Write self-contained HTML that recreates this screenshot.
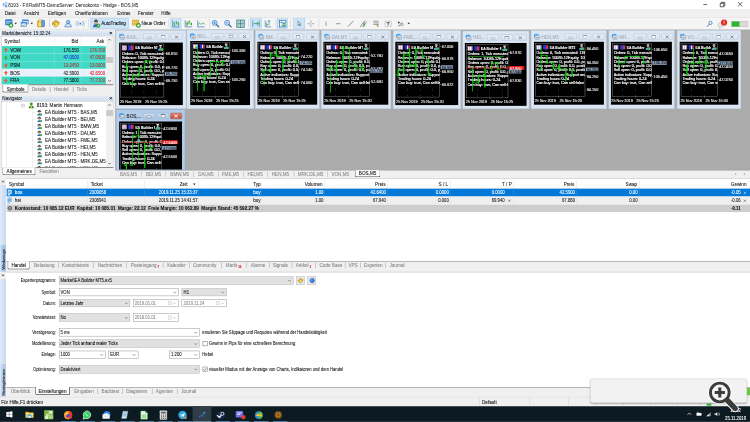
<!DOCTYPE html>
<html lang="de"><head><meta charset="utf-8"><title>8193 - FXFlatMT5-DemoServer: Demokonto - Hedge - BOS,M5</title>
<style>
html,body{margin:0;padding:0;background:#fff;}
body{width:750px;height:422px;overflow:hidden;position:relative;}
#r{position:absolute;left:0;top:0;width:1920px;height:1081px;transform:scale(0.390625);transform-origin:0 0;
font-family:"Liberation Sans",sans-serif;font-size:12px;overflow:hidden;background:#fff;filter:blur(0px);-webkit-text-stroke-width:.22px;}
#r div,#r svg{position:absolute;box-sizing:border-box;white-space:nowrap;}
#r svg{overflow:visible;}
</style></head>
<body><div id="r">
<div style="left:0px;top:0px;width:1920px;height:23.55px;background:#ffffff;"></div>
<svg style="left:6.66px;top:5.12px;width:11.78px;height:13.82px;" viewBox="0 0 10 12"><rect x="0" y="2" width="4" height="8" fill="#8fb8e6"/><rect x="5" y="0" width="5" height="6" fill="#a8d0f2"/><rect x="5" y="7" width="5" height="5" fill="#6f9fd6"/></svg>
<div style="top:4.54px;height:16px;line-height:16px;font-size:12px;color:#2a2a2a;left:20.99px;transform:scaleX(0.985);transform-origin:0 50%;-webkit-text-stroke-width:.1px;">8193 - FXFlatMT5-DemoServer: Demokonto - Hedge - BOS,M5</div>
<svg style="left:1798.4px;top:4.1px;width:15.36px;height:15.36px;" viewBox="0 0 12 12"><path d="M2 6H9.500" stroke="#111" stroke-width="1.300" fill="none"/></svg>
<svg style="left:1842.18px;top:4.1px;width:15.36px;height:15.36px;" viewBox="0 0 12 12"><path d="M1.500 3.500H8.500V10.500H1.500Z M3.500 3.500V1.500H10.500V8.500H8.500" stroke="#111" stroke-width="1.300" fill="none"/></svg>
<svg style="left:1888.26px;top:4.1px;width:13.82px;height:13.82px;" viewBox="0 0 12 12"><path d="M1 1L11 11M11 1L1 11" stroke="#111" stroke-width="1.400" fill="none"/></svg>
<div style="left:0px;top:23.04px;width:1920px;height:21.5px;background:#f0f0f0;"></div>
<div style="top:25.79px;height:16px;line-height:16px;font-size:12px;color:#1a1a1a;left:12.29px;transform:scaleX(0.99);transform-origin:0 50%;">Datei</div>
<div style="top:25.79px;height:16px;line-height:16px;font-size:12px;color:#1a1a1a;left:60.93px;transform:scaleX(0.99);transform-origin:0 50%;">Ansicht</div>
<div style="top:25.79px;height:16px;line-height:16px;font-size:12px;color:#1a1a1a;left:122.37px;transform:scaleX(0.99);transform-origin:0 50%;">Einfügen</div>
<div style="top:25.79px;height:16px;line-height:16px;font-size:12px;color:#1a1a1a;left:192.00px;transform:scaleX(0.99);transform-origin:0 50%;">Chartfunktionen</div>
<div style="top:25.79px;height:16px;line-height:16px;font-size:12px;color:#1a1a1a;left:300.29px;transform:scaleX(0.99);transform-origin:0 50%;">Extras</div>
<div style="top:25.79px;height:16px;line-height:16px;font-size:12px;color:#1a1a1a;left:352.77px;transform:scaleX(0.99);transform-origin:0 50%;">Fenster</div>
<div style="top:25.79px;height:16px;line-height:16px;font-size:12px;color:#1a1a1a;left:412.67px;transform:scaleX(0.99);transform-origin:0 50%;">Hilfe</div>
<div style="left:0px;top:44.54px;width:1920px;height:31.23px;background:#f5f5f5;border-top:1px solid #d4d4d4;border-bottom:1px solid #c4c4c4;"></div>
<svg style="left:12.8px;top:49.15px;width:22.02px;height:22.02px;" viewBox="0 0 22 22"><rect x="1" y="1" width="17" height="14" rx="1" fill="#3f86d8" stroke="#2c6db5" stroke-width="1.2"/><rect x="3" y="5" width="13" height="2.500" fill="#a9cdf3"/><rect x="3" y="9" width="8" height="2.500" fill="#a9cdf3"/><circle cx="15" cy="16" r="5.5" fill="#3fb33f" stroke="#1d7d1d" stroke-width="1"/><path d="M15 13V19M12 16H18" stroke="#fff" stroke-width="2"/></svg>
<svg style="left:37.12px;top:58.37px;width:6.66px;height:4.1px;" viewBox="0 0 8 5"><path d="M0 0H8L4 5Z" fill="#222"/></svg>
<svg style="left:51.71px;top:49.15px;width:22.02px;height:22.02px;" viewBox="0 0 22 22"><rect x="6" y="2" width="14" height="10" fill="#e8f2fc" stroke="#2c6db5" stroke-width="1.6"/><rect x="2" y="8" width="14" height="10" fill="#e8f2fc" stroke="#2c6db5" stroke-width="1.6"/><rect x="2" y="8" width="14" height="3" fill="#3d86d6"/><rect x="6" y="2" width="14" height="3" fill="#3d86d6"/><path d="M5 15l2 2 4-4" stroke="#3fb33f" stroke-width="1.6" fill="none"/></svg>
<svg style="left:77.57px;top:58.37px;width:6.66px;height:4.1px;" viewBox="0 0 8 5"><path d="M0 0H8L4 5Z" fill="#222"/></svg>
<svg style="left:92.93px;top:48.64px;width:23.04px;height:23.04px;" viewBox="0 0 22 22"><rect x="3" y="4" width="16" height="15" rx="1.5" fill="#f3c23a" stroke="#b8860b" stroke-width="1.3"/><rect x="6" y="2" width="10" height="5" fill="#fbe08a" stroke="#b8860b" stroke-width="1"/><rect x="7.500" y="8" width="3" height="9" fill="#fff3b8"/><rect x="13" y="3" width="7" height="15" rx="1" fill="#5a9ee6" stroke="#2c6db5" stroke-width="1"/></svg>
<div style="left:125.95px;top:49.41px;width:1.02px;height:22.02px;background:#b8b8b8;"></div>
<svg style="left:131.07px;top:48.64px;width:23.04px;height:23.04px;" viewBox="0 0 22 22"><path d="M2 10L11 3L20 8L12 17Z" fill="#e7b928" stroke="#9a7410" stroke-width="1.3"/><path d="M2 13L11 6L20 11L12 20Z" fill="#f6d659" stroke="#9a7410" stroke-width="1.2"/><circle cx="9" cy="12" r="1.6" fill="#6b4d05"/></svg>
<svg style="left:163.33px;top:48.64px;width:23.04px;height:23.04px;" viewBox="0 0 22 22"><circle cx="11" cy="7" r="4.2" fill="#9cc8f5" stroke="#2c6db5" stroke-width="1.4"/><path d="M3 19c0-6 4-8 8-8s8 2 8 8Z" fill="#cfe4fa" stroke="#2c6db5" stroke-width="1.4"/></svg>
<svg style="left:193.54px;top:48.64px;width:23.04px;height:23.04px;" viewBox="0 0 22 22"><circle cx="11" cy="11" r="2.2" fill="#2c6db5"/><path d="M6.5 5.5a7.5 7.5 0 0 0 0 11M15.5 5.5a7.5 7.5 0 0 1 0 11" stroke="#4a8fd6" stroke-width="1.6" fill="none"/><path d="M3.5 3a11 11 0 0 0 0 16M18.5 3a11 11 0 0 1 0 16" stroke="#9cc3ec" stroke-width="1.4" fill="none"/></svg>
<div style="left:225.79px;top:49.41px;width:1.02px;height:22.02px;background:#b8b8b8;"></div>
<div style="left:231.42px;top:46.08px;width:98.82px;height:27.65px;background:#cce4f7;border:1px solid #a8cdee;"></div>
<svg style="left:236.03px;top:49.15px;width:21.5px;height:22.02px;" viewBox="0 0 22 22"><path d="M6 3h8l2 4H4Z" fill="#444"/><rect x="7" y="1" width="6" height="3" fill="#333"/><circle cx="10" cy="10" r="3.6" fill="#f0c090" stroke="#6b4d05" stroke-width=".8"/><path d="M3 20c0-5 3-7 7-7s7 2 7 7Z" fill="#3a6fb5" stroke="#1f4a85" stroke-width="1"/><circle cx="16" cy="17" r="4.6" fill="#3fb33f" stroke="#1d7d1d" stroke-width="1"/><path d="M14.5 14.8v4.4l3.8-2.2Z" fill="#fff"/></svg>
<div style="top:52.42px;height:16px;line-height:16px;font-size:12px;color:#111;left:258.56px;transform:scaleX(0.97);transform-origin:0 50%;">AutoTrading</div>
<svg style="left:336.9px;top:48.13px;width:24.06px;height:23.55px;" viewBox="0 0 22 22"><rect x="2" y="3" width="15" height="12" fill="#f3d36b" stroke="#b8860b" stroke-width="1.2"/><path d="M2 7H17M2 11H17M7 3V15M12 3V15" stroke="#c99a1c" stroke-width=".8"/><circle cx="16" cy="16" r="5.2" fill="#3fb33f" stroke="#1d7d1d" stroke-width="1"/><path d="M16 13V19M13 16H19" stroke="#fff" stroke-width="2"/></svg>
<div style="top:52.42px;height:16px;line-height:16px;font-size:12px;color:#111;left:361.98px;transform:scaleX(0.97);transform-origin:0 50%;">Neue Order</div>
<div style="left:432.13px;top:49.41px;width:1.02px;height:22.02px;background:#b8b8b8;"></div>
<div style="left:437.25px;top:47.1px;width:26.62px;height:26.11px;background:#cce4f7;border:1px solid #a3cbee;"></div>
<svg style="left:439.3px;top:48.64px;width:23.04px;height:23.04px;" viewBox="0 0 22 22"><path d="M3 3V19H20" stroke="#2c6db5" stroke-width="1.6" fill="none"/><path d="M7 8V17M5 10H7M7 15H9M12 5V13M10 7H12M12 11H14M17 7V16M15 9H17M17 14H19" stroke="#2a9d2a" stroke-width="1.8" fill="none"/></svg>
<svg style="left:470.53px;top:48.64px;width:23.04px;height:23.04px;" viewBox="0 0 22 22"><path d="M3 3V19H20" stroke="#2c6db5" stroke-width="1.6" fill="none"/><rect x="6" y="8" width="3" height="7" fill="#2a9d2a"/><path d="M7.5 5V18" stroke="#2a9d2a" stroke-width="1"/><rect x="11.5" y="5" width="3" height="6" fill="#fff" stroke="#2a9d2a" stroke-width="1"/><path d="M13 3V14" stroke="#2a9d2a" stroke-width="1"/><rect x="16.5" y="9" width="3" height="6" fill="#2a9d2a"/></svg>
<svg style="left:502.78px;top:48.64px;width:23.04px;height:23.04px;" viewBox="0 0 22 22"><path d="M3 3V19H20" stroke="#2c6db5" stroke-width="1.6" fill="none"/><path d="M4 14C8 4 10 16 13 12S17 8 20 13" stroke="#2a9d2a" stroke-width="1.8" fill="none"/></svg>
<div style="left:535.55px;top:49.41px;width:1.02px;height:22.02px;background:#b8b8b8;"></div>
<svg style="left:540.16px;top:48.64px;width:23.04px;height:23.04px;" viewBox="0 0 22 22"><circle cx="9" cy="9" r="6" fill="#d6e9fb" stroke="#3d86d6" stroke-width="2"/><path d="M6 9H12M9 6V12" stroke="#2c6db5" stroke-width="1.6"/><path d="M13.5 13.5L19 19" stroke="#2c5f9e" stroke-width="3" stroke-linecap="round"/></svg>
<svg style="left:572.42px;top:48.64px;width:23.04px;height:23.04px;" viewBox="0 0 22 22"><circle cx="9" cy="9" r="6" fill="#d6e9fb" stroke="#3d86d6" stroke-width="2"/><path d="M6 9H12" stroke="#2c6db5" stroke-width="1.6"/><path d="M13.5 13.5L19 19" stroke="#2c5f9e" stroke-width="3" stroke-linecap="round"/></svg>
<svg style="left:604.16px;top:48.64px;width:23.55px;height:23.55px;" viewBox="0 0 22 22"><rect x="2" y="2" width="18" height="18" fill="#bfe0c0" stroke="#2c6db5" stroke-width="1.6"/><path d="M11 2V20M2 11H20" stroke="#2c6db5" stroke-width="1.6"/><path d="M4 4l4 4M18 4l-4 4M4 18l4-4M18 18l-4-4" stroke="#2a9d2a" stroke-width="1.4"/></svg>
<div style="left:635.9px;top:49.41px;width:1.02px;height:22.02px;background:#b8b8b8;"></div>
<div style="left:640px;top:47.1px;width:29.7px;height:26.11px;background:#cce4f7;border:1px solid #a3cbee;"></div>
<svg style="left:643.58px;top:48.64px;width:23.04px;height:23.04px;" viewBox="0 0 22 22"><path d="M3 3V19M19 3V19" stroke="#2c6db5" stroke-width="1.6"/><path d="M6 11H16M13 7l4 4-4 4" stroke="#2a9d2a" stroke-width="2" fill="none"/></svg>
<svg style="left:675.33px;top:48.64px;width:23.04px;height:23.04px;" viewBox="0 0 22 22"><path d="M4 3V19H18" stroke="#2c6db5" stroke-width="1.6" fill="none"/><path d="M13 3V15M10 6l3-3 3 3" stroke="#2c6db5" stroke-width="1.6" fill="none"/><path d="M7 9V16M9 12V16" stroke="#2a9d2a" stroke-width="1.6"/></svg>
<div style="left:705.54px;top:49.41px;width:1.02px;height:22.02px;background:#b8b8b8;"></div>
<div style="left:709.12px;top:47.1px;width:28.16px;height:26.11px;background:#cce4f7;border:1px solid #a3cbee;"></div>
<svg style="left:711.68px;top:48.64px;width:23.04px;height:23.04px;" viewBox="0 0 22 22"><rect x="3" y="3" width="16" height="16" fill="#fff" stroke="#2c6db5" stroke-width="1.6"/><path d="M3 8H19M9 3V19" stroke="#2c6db5" stroke-width="1.2"/><rect x="11" y="10" width="6" height="3" fill="#2a9d2a"/><rect x="11" y="14.5" width="6" height="3" fill="#2a9d2a"/></svg>
<div style="left:744.45px;top:49.41px;width:1.02px;height:22.02px;background:#b8b8b8;"></div>
<div style="left:750.59px;top:47.1px;width:30.21px;height:26.11px;background:#cce4f7;border:1px solid #a3cbee;"></div>
<svg style="left:757.76px;top:52.22px;width:15.87px;height:17.41px;" viewBox="0 0 22 22"><path d="M7 2V17l3.500-3.500L13 19l2-1-2.500-5.500H17Z" fill="#fff" stroke="#222" stroke-width="1.500"/></svg>
<svg style="left:785.41px;top:49.66px;width:21.5px;height:21.5px;" viewBox="0 0 22 22"><path d="M11 2V9M11 13V20M2 11H9M13 11H20" stroke="#555" stroke-width="1.200"/></svg>
<div style="left:816.13px;top:49.41px;width:1.02px;height:22.02px;background:#b8b8b8;"></div>
<svg style="left:824.32px;top:49.66px;width:21.5px;height:21.5px;" viewBox="0 0 22 22"><path d="M11 5V17" stroke="#666" stroke-width="1.500"/></svg>
<svg style="left:855.04px;top:49.66px;width:21.5px;height:21.5px;" viewBox="0 0 22 22"><path d="M5 11H17" stroke="#555" stroke-width="1.500"/></svg>
<svg style="left:887.3px;top:49.66px;width:21.5px;height:21.5px;" viewBox="0 0 22 22"><path d="M4 18L18 4" stroke="#333" stroke-width="1.5"/></svg>
<svg style="left:919.04px;top:48.64px;width:23.04px;height:23.04px;" viewBox="0 0 22 22"><path d="M3 19L15 3M9 19L19 6" stroke="#333" stroke-width="1.3"/><path d="M11 8v10M14 8v10" stroke="#2a9d2a" stroke-width="1.4"/></svg>
<svg style="left:950.78px;top:48.64px;width:23.04px;height:23.04px;" viewBox="0 0 22 22"><path d="M4 5H18M4 9H18M4 13H18" stroke="#555" stroke-width="1.2"/><path d="M12 11l5 7-2 .5Z" fill="#d4a21a" stroke="#8a6a10" stroke-width=".8"/></svg>
<svg style="left:983.04px;top:49.66px;width:21.5px;height:21.5px;" viewBox="0 0 22 22"><rect x="3" y="4" width="16" height="14" fill="none" stroke="#666" stroke-width="1.2" stroke-dasharray="2 1.5"/><path d="M7 8H15M11 8V15" stroke="#222" stroke-width="1.8"/></svg>
<svg style="left:1014.27px;top:49.15px;width:22.53px;height:22.53px;" viewBox="0 0 22 22"><path d="M4 5l6 3-4 4Z" fill="#444"/><circle cx="14" cy="13" r="3.2" fill="none" stroke="#444" stroke-width="1.4"/><path d="M5 17l5-2" stroke="#444" stroke-width="1.4"/></svg>
<svg style="left:1042.69px;top:58.37px;width:6.66px;height:4.1px;" viewBox="0 0 8 5"><path d="M0 0H8L4 5Z" fill="#222"/></svg>
<svg style="left:1807.87px;top:52.22px;width:18.43px;height:18.43px;" viewBox="0 0 22 22"><circle cx="13" cy="8" r="5" fill="#e6f1fc" stroke="#2c6db5" stroke-width="2"/><path d="M9.5 12L3 19" stroke="#2c6db5" stroke-width="2.6" stroke-linecap="round"/></svg>
<svg style="left:1834.5px;top:48.13px;width:26.62px;height:25.6px;" viewBox="0 0 24 24"><path d="M2 15c0-4 3-6 7-6s7 2 7 6-3 5-6 5l-4 3v-3c-2 0-4-2-4-5Z" fill="#e4e4e4" stroke="#aaa" stroke-width="1"/><circle cx="17" cy="9" r="7.400" fill="#e02b20"/><rect x="16.100" y="4.600" width="1.800" height="5.400" fill="#fff"/><rect x="16.100" y="11.200" width="1.800" height="1.800" fill="#fff"/></svg>
<div style="left:1871.87px;top:53.76px;width:43.52px;height:14.85px;background:#dadada;border:1px solid #b0b0b0;"></div>
<div style="left:1872.9px;top:54.78px;width:20.48px;height:12.8px;background:#2db52d;"></div>
<div style="left:0px;top:75.78px;width:295.94px;height:379.9px;background:#f0f0f0;"></div>
<div style="left:4.1px;top:77.82px;width:285.7px;height:13.82px;background:linear-gradient(#e4ecf6,#cfdcec);"></div>
<div style="top:76.99px;height:16px;line-height:16px;font-size:12px;color:#1a1a1a;left:6.14px;transform:scaleX(0.93);transform-origin:0 50%;">Marktübersicht: 15:32:24</div>
<svg style="left:280.06px;top:81.15px;width:7.17px;height:7.17px;" viewBox="0 0 8 8"><path d="M1 1L7 7M7 1L1 7" stroke="#000" stroke-width="2.2"/></svg>
<div style="left:4.1px;top:92.16px;width:285.7px;height:124.42px;background:#fff;border:1px solid #b9b9b9;"></div>
<div style="top:97.47px;height:16px;line-height:16px;font-size:12px;color:#222;left:10.75px;transform:scaleX(0.985);transform-origin:0 50%;">Symbol</div>
<div style="top:97.47px;height:16px;line-height:16px;font-size:12px;color:#222;left:-699.81px;width:900px;text-align:right;transform:scaleX(0.985);transform-origin:100% 50%;">Bid</div>
<div style="top:97.47px;height:16px;line-height:16px;font-size:12px;color:#222;left:-633.25px;width:900px;text-align:right;transform:scaleX(0.985);transform-origin:100% 50%;">Ask</div>
<div style="left:138.24px;top:94.72px;width:1.02px;height:20.48px;background:#dcdcdc;"></div>
<div style="left:206.85px;top:94.72px;width:1.02px;height:20.48px;background:#dcdcdc;"></div>
<div style="left:5.12px;top:117.5px;width:266.24px;height:19.51px;background:#3fd9c6;"></div>
<svg style="left:10.24px;top:122.11px;width:10.24px;height:10.75px;" viewBox="0 0 10 10"><path d="M5 0L10 5.500H7.200V10H2.800V5.500H0Z" fill="#ee5a2c"/></svg>
<div style="top:120.00px;height:16px;line-height:16px;font-size:12px;color:#111;left:25.60px;transform:scaleX(0.985);transform-origin:0 50%;">VOW</div>
<div style="top:120.00px;height:16px;line-height:16px;font-size:12px;color:#1a1a1a;left:-698.27px;width:900px;text-align:right;transform:scaleX(0.91);transform-origin:100% 50%;">176.550</div>
<div style="top:120.00px;height:16px;line-height:16px;font-size:12px;color:#b43a3a;left:-631.20px;width:900px;text-align:right;transform:scaleX(0.91);transform-origin:100% 50%;">176.700</div>
<div style="left:5.12px;top:137.22px;width:266.24px;height:19.51px;background:#3fd9c6;"></div>
<svg style="left:10.24px;top:142.85px;width:10.24px;height:10.75px;" viewBox="0 0 10 10"><path d="M5 10L10 4.500H7.200V0H2.800V4.500H0Z" fill="#35b52f"/></svg>
<div style="top:139.71px;height:16px;line-height:16px;font-size:12px;color:#111;left:25.60px;transform:scaleX(0.985);transform-origin:0 50%;">VON</div>
<div style="top:139.71px;height:16px;line-height:16px;font-size:12px;color:#1a32d6;left:-698.27px;width:900px;text-align:right;transform:scaleX(0.91);transform-origin:100% 50%;">47.0500</div>
<div style="top:139.71px;height:16px;line-height:16px;font-size:12px;color:#a8403c;left:-631.20px;width:900px;text-align:right;transform:scaleX(0.91);transform-origin:100% 50%;">47.0600</div>
<div style="left:5.12px;top:156.93px;width:266.24px;height:19.51px;background:#3fd9c6;"></div>
<svg style="left:10.24px;top:161.54px;width:10.24px;height:10.75px;" viewBox="0 0 10 10"><path d="M5 0L10 5.500H7.200V10H2.800V5.500H0Z" fill="#ee5a2c"/></svg>
<div style="top:159.42px;height:16px;line-height:16px;font-size:12px;color:#111;left:25.60px;transform:scaleX(0.985);transform-origin:0 50%;">PSM</div>
<div style="top:159.42px;height:16px;line-height:16px;font-size:12px;color:#b43a3a;left:-698.27px;width:900px;text-align:right;transform:scaleX(0.91);transform-origin:100% 50%;">13.0450</div>
<div style="top:159.42px;height:16px;line-height:16px;font-size:12px;color:#b43a3a;left:-631.20px;width:900px;text-align:right;transform:scaleX(0.91);transform-origin:100% 50%;">13.0600</div>
<div style="left:5.12px;top:176.64px;width:266.24px;height:19.51px;background:#e9f0fb;"></div>
<svg style="left:10.24px;top:181.25px;width:10.24px;height:10.75px;" viewBox="0 0 10 10"><path d="M5 0L10 5.500H7.200V10H2.800V5.500H0Z" fill="#ee5a2c"/></svg>
<div style="top:179.14px;height:16px;line-height:16px;font-size:12px;color:#111;left:25.60px;transform:scaleX(0.985);transform-origin:0 50%;">BOS</div>
<div style="top:179.14px;height:16px;line-height:16px;font-size:12px;color:#1a1a1a;left:-698.27px;width:900px;text-align:right;transform:scaleX(0.91);transform-origin:100% 50%;">42.5900</div>
<div style="top:179.14px;height:16px;line-height:16px;font-size:12px;color:#e0222a;left:-631.20px;width:900px;text-align:right;transform:scaleX(0.91);transform-origin:100% 50%;">42.6500</div>
<div style="left:5.12px;top:196.35px;width:266.24px;height:19.51px;background:#3fd9c6;"></div>
<svg style="left:10.24px;top:200.96px;width:10.24px;height:10.75px;" viewBox="0 0 10 10"><path d="M5 0L10 5.500H7.200V10H2.800V5.500H0Z" fill="#ee5a2c"/></svg>
<div style="top:198.85px;height:16px;line-height:16px;font-size:12px;color:#111;left:25.60px;transform:scaleX(0.985);transform-origin:0 50%;">FRA</div>
<div style="top:198.85px;height:16px;line-height:16px;font-size:12px;color:#1a1a1a;left:-698.27px;width:900px;text-align:right;transform:scaleX(0.91);transform-origin:100% 50%;">77.5800</div>
<div style="top:198.85px;height:16px;line-height:16px;font-size:12px;color:#a8403c;left:-631.20px;width:900px;text-align:right;transform:scaleX(0.91);transform-origin:100% 50%;">77.7200</div>
<div style="left:138.24px;top:117.5px;width:1.02px;height:98.56px;background:rgba(255,255,255,.4);"></div>
<div style="left:206.85px;top:117.5px;width:1.02px;height:98.56px;background:rgba(255,255,255,.4);"></div>
<div style="left:271.87px;top:93.18px;width:17.41px;height:122.37px;background:#f0f0f0;"></div>
<svg style="left:276.22px;top:99.33px;width:8.7px;height:5.63px;" viewBox="0 0 10 6"><path d="M1 5L5 1L9 5" stroke="#333" stroke-width="1.800" fill="none"/></svg>
<svg style="left:276.22px;top:203.78px;width:8.7px;height:5.63px;" viewBox="0 0 10 6"><path d="M1 1L5 5L9 1" stroke="#333" stroke-width="1.800" fill="none"/></svg>
<div style="left:272.38px;top:145.92px;width:16.38px;height:15.36px;background:#c9c9c9;"></div>
<div style="left:72.7px;top:216.06px;width:217.09px;height:1.79px;background:#707070;"></div>
<div style="left:6.14px;top:216.58px;width:67.07px;height:20.48px;background:#fff;border:2px solid #444;border-top:none;border-radius:0 0 4px 4px;"></div>
<div style="top:219.58px;height:16px;line-height:16px;font-size:12px;color:#111;left:-410.32px;width:900px;text-align:center;transform:scaleX(0.985);transform-origin:50% 50%;">Symbole</div>
<div style="top:220.10px;height:16px;line-height:16px;font-size:12px;color:#8a8a8a;left:82.43px;transform:scaleX(0.985);transform-origin:0 50%;">Details</div>
<div style="top:220.10px;height:16px;line-height:16px;font-size:11.5px;color:#8a8a8a;left:126.98px;">|</div>
<div style="top:220.10px;height:16px;line-height:16px;font-size:12px;color:#8a8a8a;left:137.73px;transform:scaleX(0.985);transform-origin:0 50%;">Handel</div>
<div style="top:220.10px;height:16px;line-height:16px;font-size:11.5px;color:#8a8a8a;left:185.34px;">|</div>
<div style="top:220.10px;height:16px;line-height:16px;font-size:12px;color:#8a8a8a;left:195.58px;transform:scaleX(0.985);transform-origin:0 50%;">Ticks</div>
<div style="left:4.1px;top:244.74px;width:285.7px;height:13.82px;background:linear-gradient(#e4ecf6,#cfdcec);"></div>
<div style="top:243.90px;height:16px;line-height:16px;font-size:12px;color:#1a1a1a;left:6.14px;transform:scaleX(0.985);transform-origin:0 50%;">Navigator</div>
<svg style="left:280.06px;top:248.06px;width:7.17px;height:7.17px;" viewBox="0 0 8 8"><path d="M1 1L7 7M7 1L1 7" stroke="#000" stroke-width="2.2"/></svg>
<div style="left:4.1px;top:258.56px;width:285.7px;height:169.98px;background:#fff;border:1px solid #b9b9b9;overflow:hidden;"></div>
<div style="left:15.87px;top:259.58px;width:1.02px;height:167.94px;background:#d8d8d8;"></div>
<div style="left:82.94px;top:276.48px;width:1.02px;height:151.04px;background:#d8d8d8;"></div>
<div style="left:54.78px;top:266.24px;width:8.7px;height:8.7px;background:#fff;border:1px solid #aaa;"></div>
<div style="left:56.83px;top:270.08px;width:4.61px;height:1.02px;background:#555;"></div>
<svg style="left:72.19px;top:260.61px;width:16.38px;height:17.41px;" viewBox="0 0 16 17"><circle cx="8" cy="5" r="3.6" fill="#3d9a2a"/><path d="M1.5 16c0-5 3-7 6.500-7s6.500 2 6.500 7Z" fill="#2f8a1f"/><circle cx="8" cy="12.500" r="2.200" fill="#f3d04a"/></svg>
<div style="top:261.31px;height:16px;line-height:16px;font-size:12px;color:#222;left:93.70px;transform:scaleX(0.985);transform-origin:0 50%;">8193: Martin Hermann</div>
<div style="left:83.46px;top:287.74px;width:9.22px;height:1.02px;background:#d8d8d8;"></div>
<svg style="left:92.67px;top:279.55px;width:15.36px;height:16.38px;" viewBox="0 0 16 17"><path d="M4 4h8l1.500 3H2.500Z" fill="#444"/><rect x="5.500" y="2" width="5" height="2.500" fill="#333"/><circle cx="8" cy="9" r="2.600" fill="#e8b888"/><path d="M2.500 16c0-3.600 2.400-5 5.500-5s5.500 1.400 5.500 5Z" fill="#3a6fb5"/><circle cx="12.500" cy="13.500" r="3" fill="#3fb33f"/></svg>
<div style="top:279.74px;height:16px;line-height:16px;font-size:12px;color:#222;left:114.69px;transform:scaleX(0.97);transform-origin:0 50%;clip-path:inset(0 0 0.0px 0);">EA Builder MT5 - BAS,M5</div>
<div style="left:83.46px;top:305.61px;width:9.22px;height:1.02px;background:#d8d8d8;"></div>
<svg style="left:92.67px;top:297.42px;width:15.36px;height:16.38px;" viewBox="0 0 16 17"><path d="M4 4h8l1.500 3H2.500Z" fill="#444"/><rect x="5.500" y="2" width="5" height="2.500" fill="#333"/><circle cx="8" cy="9" r="2.600" fill="#e8b888"/><path d="M2.500 16c0-3.600 2.400-5 5.500-5s5.500 1.400 5.500 5Z" fill="#3a6fb5"/><circle cx="12.500" cy="13.500" r="3" fill="#3fb33f"/></svg>
<div style="top:297.61px;height:16px;line-height:16px;font-size:12px;color:#222;left:114.69px;transform:scaleX(0.97);transform-origin:0 50%;clip-path:inset(0 0 0.0px 0);">EA Builder MT5 - BEI,M5</div>
<div style="left:83.46px;top:323.48px;width:9.22px;height:1.02px;background:#d8d8d8;"></div>
<svg style="left:92.67px;top:315.29px;width:15.36px;height:16.38px;" viewBox="0 0 16 17"><path d="M4 4h8l1.500 3H2.500Z" fill="#444"/><rect x="5.500" y="2" width="5" height="2.500" fill="#333"/><circle cx="8" cy="9" r="2.600" fill="#e8b888"/><path d="M2.500 16c0-3.600 2.400-5 5.500-5s5.500 1.400 5.500 5Z" fill="#3a6fb5"/><circle cx="12.500" cy="13.500" r="3" fill="#3fb33f"/></svg>
<div style="top:315.48px;height:16px;line-height:16px;font-size:12px;color:#222;left:114.69px;transform:scaleX(0.97);transform-origin:0 50%;clip-path:inset(0 0 0.0px 0);">EA Builder MT5 - BMW,M5</div>
<div style="left:83.46px;top:341.35px;width:9.22px;height:1.02px;background:#d8d8d8;"></div>
<svg style="left:92.67px;top:333.16px;width:15.36px;height:16.38px;" viewBox="0 0 16 17"><path d="M4 4h8l1.500 3H2.500Z" fill="#444"/><rect x="5.500" y="2" width="5" height="2.500" fill="#333"/><circle cx="8" cy="9" r="2.600" fill="#e8b888"/><path d="M2.500 16c0-3.600 2.400-5 5.500-5s5.500 1.400 5.500 5Z" fill="#3a6fb5"/><circle cx="12.500" cy="13.500" r="3" fill="#3fb33f"/></svg>
<div style="top:333.35px;height:16px;line-height:16px;font-size:12px;color:#222;left:114.69px;transform:scaleX(0.97);transform-origin:0 50%;clip-path:inset(0 0 0.0px 0);">EA Builder MT5 - DAI,M5</div>
<div style="left:83.46px;top:359.22px;width:9.22px;height:1.02px;background:#d8d8d8;"></div>
<svg style="left:92.67px;top:351.03px;width:15.36px;height:16.38px;" viewBox="0 0 16 17"><path d="M4 4h8l1.500 3H2.500Z" fill="#444"/><rect x="5.500" y="2" width="5" height="2.500" fill="#333"/><circle cx="8" cy="9" r="2.600" fill="#e8b888"/><path d="M2.500 16c0-3.600 2.400-5 5.500-5s5.500 1.400 5.500 5Z" fill="#3a6fb5"/><circle cx="12.500" cy="13.500" r="3" fill="#3fb33f"/></svg>
<div style="top:351.22px;height:16px;line-height:16px;font-size:12px;color:#222;left:114.69px;transform:scaleX(0.97);transform-origin:0 50%;clip-path:inset(0 0 0.0px 0);">EA Builder MT5 - FME,M5</div>
<div style="left:83.46px;top:377.09px;width:9.22px;height:1.02px;background:#d8d8d8;"></div>
<svg style="left:92.67px;top:368.9px;width:15.36px;height:16.38px;" viewBox="0 0 16 17"><path d="M4 4h8l1.500 3H2.500Z" fill="#444"/><rect x="5.500" y="2" width="5" height="2.500" fill="#333"/><circle cx="8" cy="9" r="2.600" fill="#e8b888"/><path d="M2.500 16c0-3.600 2.400-5 5.500-5s5.500 1.400 5.500 5Z" fill="#3a6fb5"/><circle cx="12.500" cy="13.500" r="3" fill="#3fb33f"/></svg>
<div style="top:369.09px;height:16px;line-height:16px;font-size:12px;color:#222;left:114.69px;transform:scaleX(0.97);transform-origin:0 50%;clip-path:inset(0 0 0.0px 0);">EA Builder MT5 - HEI,M5</div>
<div style="left:83.46px;top:394.96px;width:9.22px;height:1.02px;background:#d8d8d8;"></div>
<svg style="left:92.67px;top:386.76px;width:15.36px;height:16.38px;" viewBox="0 0 16 17"><path d="M4 4h8l1.500 3H2.500Z" fill="#444"/><rect x="5.500" y="2" width="5" height="2.500" fill="#333"/><circle cx="8" cy="9" r="2.600" fill="#e8b888"/><path d="M2.500 16c0-3.600 2.400-5 5.500-5s5.500 1.400 5.500 5Z" fill="#3a6fb5"/><circle cx="12.500" cy="13.500" r="3" fill="#3fb33f"/></svg>
<div style="top:386.96px;height:16px;line-height:16px;font-size:12px;color:#222;left:114.69px;transform:scaleX(0.97);transform-origin:0 50%;clip-path:inset(0 0 0.0px 0);">EA Builder MT5 - HEN,M5</div>
<div style="left:83.46px;top:412.83px;width:9.22px;height:1.02px;background:#d8d8d8;"></div>
<svg style="left:92.67px;top:404.63px;width:15.36px;height:16.38px;" viewBox="0 0 16 17"><path d="M4 4h8l1.500 3H2.500Z" fill="#444"/><rect x="5.500" y="2" width="5" height="2.500" fill="#333"/><circle cx="8" cy="9" r="2.600" fill="#e8b888"/><path d="M2.500 16c0-3.600 2.400-5 5.500-5s5.500 1.400 5.500 5Z" fill="#3a6fb5"/><circle cx="12.500" cy="13.500" r="3" fill="#3fb33f"/></svg>
<div style="top:404.83px;height:16px;line-height:16px;font-size:12px;color:#222;left:114.69px;transform:scaleX(0.97);transform-origin:0 50%;clip-path:inset(0 0 0.0px 0);">EA Builder MT5 - MRK.DE,M5</div>
<div style="left:83.46px;top:430.69px;width:9.22px;height:1.02px;background:#d8d8d8;"></div>
<svg style="left:92.67px;top:422.5px;width:15.36px;height:16.38px;" viewBox="0 0 16 17"><path d="M4 4h8l1.500 3H2.500Z" fill="#444"/><rect x="5.500" y="2" width="5" height="2.500" fill="#333"/><circle cx="8" cy="9" r="2.600" fill="#e8b888"/><path d="M2.500 16c0-3.600 2.400-5 5.500-5s5.500 1.400 5.500 5Z" fill="#3a6fb5"/><circle cx="12.500" cy="13.500" r="3" fill="#3fb33f"/></svg>
<div style="top:422.69px;height:16px;line-height:16px;font-size:12px;color:#222;left:114.69px;transform:scaleX(0.97);transform-origin:0 50%;clip-path:inset(0 0 11.9px 0);">EA Builder MT5 - VON,M5</div>
<div style="left:4.1px;top:427.52px;width:285.7px;height:1.54px;background:#b9b9b9;"></div>
<div style="left:0px;top:428.54px;width:295.94px;height:27.14px;background:#f0f0f0;"></div>
<div style="left:271.87px;top:259.58px;width:17.41px;height:167.94px;background:#f0f0f0;"></div>
<svg style="left:276.22px;top:265.73px;width:8.7px;height:5.63px;" viewBox="0 0 10 6"><path d="M1 5L5 1L9 5" stroke="#333" stroke-width="1.800" fill="none"/></svg>
<svg style="left:276.22px;top:415.74px;width:8.7px;height:5.63px;" viewBox="0 0 10 6"><path d="M1 1L5 5L9 1" stroke="#333" stroke-width="1.800" fill="none"/></svg>
<div style="left:272.38px;top:281.6px;width:16.38px;height:15.87px;background:#c9c9c9;"></div>
<div style="left:90.62px;top:428.03px;width:199.17px;height:1.79px;background:#707070;"></div>
<div style="left:6.14px;top:428.54px;width:84.99px;height:19.97px;background:#fff;border:2px solid #444;border-top:none;border-radius:0 0 4px 4px;"></div>
<div style="top:430.27px;height:16px;line-height:16px;font-size:12px;color:#111;left:-401.36px;width:900px;text-align:center;transform:scaleX(0.985);transform-origin:50% 50%;">Allgemeines</div>
<div style="top:429.76px;height:16px;line-height:16px;font-size:12px;color:#8a8a8a;left:101.38px;transform:scaleX(0.985);transform-origin:0 50%;">Favoriten</div>
<div style="left:295.94px;top:75.78px;width:1624.06px;height:359.94px;background:#ababab;border-left:1px solid #8a8a8a;"></div>
<div style="left:296.45px;top:77.31px;width:180.74px;height:201.22px;background:#dbe6f4;border:1px solid #b4c3d6;border-radius:2px 2px 0 0;"></div>
<svg style="left:304.64px;top:86.02px;width:14.85px;height:16.9px;" viewBox="0 0 16 17"><rect x="1" y="1" width="11" height="9" rx="2" fill="#5db0f0" stroke="#2f86d3" stroke-width="1.2"/><rect x="3" y="5" width="12" height="10" rx="2" fill="#eaf4fd" stroke="#2f86d3" stroke-width="1.4"/><rect x="5.5" y="9" width="7" height="3.500" fill="#f08a3c"/></svg>
<div style="top:87.23px;height:16px;line-height:16px;font-size:12px;color:#a9adb3;left:323.58px;transform:scaleX(0.985);transform-origin:0 50%;">BAS,...</div>
<div style="left:367.1px;top:86.02px;width:30.72px;height:16.38px;background:linear-gradient(#e6eef8,#d6e2f1);border:1px solid #aebdd0;border-radius:2px;"></div>
<div style="left:376.32px;top:93.7px;width:12.29px;height:5.12px;background:#f4f7fb;border:1.5px solid #7a828e;border-radius:2px;"></div>
<div style="left:401.92px;top:86.02px;width:30.72px;height:16.38px;background:linear-gradient(#e6eef8,#d6e2f1);border:1px solid #aebdd0;border-radius:2px;"></div>
<div style="left:411.9px;top:89.6px;width:10.75px;height:8.7px;background:#f4f7fb;border:1px solid #7a828e;border-top-width:2px;"></div>
<div style="left:436.74px;top:86.02px;width:30.72px;height:16.38px;background:linear-gradient(#e6eef8,#d6e2f1);border:1px solid #aebdd0;border-radius:2px;"></div>
<svg style="left:446.98px;top:89.6px;width:10.24px;height:9.22px;" viewBox="0 0 10 9"><path d="M1 1L9 8M9 1L1 8" stroke="#7a828e" stroke-width="2"/></svg>
<div style="left:305.15px;top:108.54px;width:162.82px;height:160.77px;background:#000;overflow:hidden;"></div>
<div style="left:308.48px;top:111.87px;width:111.87px;height:137.22px;border:1px solid #9a9a9a;"></div>
<div style="left:335.62px;top:112.9px;width:1.02px;height:135.17px;background:repeating-linear-gradient(#5a6a7a 0 2px,transparent 2px 6px);"></div>
<div style="left:367.87px;top:112.9px;width:1.02px;height:135.17px;background:repeating-linear-gradient(#5a6a7a 0 2px,transparent 2px 6px);"></div>
<div style="left:400.13px;top:112.9px;width:1.02px;height:135.17px;background:repeating-linear-gradient(#5a6a7a 0 2px,transparent 2px 6px);"></div>
<div style="left:312.06px;top:116.22px;width:12.8px;height:12.29px;background:linear-gradient(90deg,#f1edff 0 28%,#ffb0b8 28% 52%,#f6f2ff 52% 72%,#b8b4ff 72%);border:1px solid #c9c4ff;"></div>
<div style="left:328.45px;top:116.22px;width:14.34px;height:12.29px;background:linear-gradient(90deg,#2238e0 0 48%,#f0eaff 48% 58%,#e83030 58%);border:1px solid #3040d0;"></div>
<div style="top:114.37px;height:16px;line-height:16px;font-size:11px;color:#fff;font-weight:bold;left:345.86px;transform:scaleX(0.82);transform-origin:0 50%;max-width:69.62px;overflow:hidden;">EA Builder MT5</div>
<svg style="left:402.94px;top:113.66px;width:15.87px;height:16.9px;" viewBox="0 0 16 16"><path d="M5 1h6l1 3H4Z" fill="#ddd"/><circle cx="8" cy="6" r="2.400" fill="#f0d0b0"/><path d="M2 15c0-4 2.500-6 6-6s6 2 6 6Z" fill="#7fb8e8"/><circle cx="11.500" cy="12" r="3.400" fill="#3fc23f"/><circle cx="5" cy="12.500" r="2.600" fill="#4aa0e8"/></svg>
<div style="top:128.45px;height:16px;line-height:16px;font-size:11.2px;color:#ffffff;left:312.06px;width:125.19px;overflow:hidden;transform:scaleX(0.865);transform-origin:0 50%;-webkit-text-stroke:.45px #fff;">Orders: 0, Tick executed: 119</div>
<div style="top:139.38px;height:16px;line-height:16px;font-size:11.2px;color:#ffffff;left:312.06px;width:125.19px;overflow:hidden;transform:scaleX(0.865);transform-origin:0 50%;-webkit-text-stroke:.45px #fff;">Balance: 10085.12Equity: 10085.01</div>
<div style="top:150.31px;height:16px;line-height:16px;font-size:11.2px;color:#ffffff;left:312.06px;width:125.19px;overflow:hidden;transform:scaleX(0.865);transform-origin:0 50%;-webkit-text-stroke:.45px #fff;">Orders open: 0, profit: 0.0, positions: 0</div>
<div style="top:161.24px;height:16px;line-height:16px;font-size:11.2px;color:#ffffff;left:312.06px;width:125.19px;overflow:hidden;transform:scaleX(0.865);transform-origin:0 50%;-webkit-text-stroke:.45px #fff;">Buy open: 0, profit: 0.0, positions: 0</div>
<div style="top:172.17px;height:16px;line-height:16px;font-size:11.2px;color:#ffffff;left:312.06px;width:125.19px;overflow:hidden;transform:scaleX(0.865);transform-origin:0 50%;-webkit-text-stroke:.45px #fff;">Sell open: 0, profit: 0.0, positions: 0</div>
<div style="top:183.10px;height:16px;line-height:16px;font-size:11.2px;color:#ffffff;left:312.06px;width:125.19px;overflow:hidden;transform:scaleX(0.865);transform-origin:0 50%;-webkit-text-stroke:.45px #fff;">Active indicators: Support and Resistance</div>
<div style="top:194.04px;height:16px;line-height:16px;font-size:11.2px;color:#ffffff;left:312.06px;width:125.19px;overflow:hidden;transform:scaleX(0.865);transform-origin:0 50%;-webkit-text-stroke:.45px #fff;">Trading hours: 0-24</div>
<div style="top:204.97px;height:16px;line-height:16px;font-size:11.2px;color:#ffffff;left:312.06px;width:125.19px;overflow:hidden;transform:scaleX(0.865);transform-origin:0 50%;-webkit-text-stroke:.45px #fff;">Can buy: true, Can sell:false</div>
<div style="left:323.07px;top:160px;width:2.56px;height:53.25px;background:#00d800;"></div>
<div style="left:317.7px;top:168.58px;width:6.66px;height:2.3px;background:#00d800;"></div>
<div style="left:324.35px;top:211.33px;width:7.68px;height:2.3px;background:#00d800;"></div>
<div style="left:337.92px;top:187.65px;width:2.56px;height:36.35px;background:#00d800;"></div>
<div style="left:332.54px;top:211.33px;width:6.66px;height:2.3px;background:#00d800;"></div>
<div style="left:339.2px;top:193.41px;width:7.68px;height:2.3px;background:#00d800;"></div>
<div style="left:355.07px;top:170.75px;width:2.56px;height:23.3px;background:#00d800;"></div>
<div style="left:349.7px;top:193.41px;width:6.66px;height:2.3px;background:#00d800;"></div>
<div style="left:356.35px;top:172.93px;width:7.68px;height:2.3px;background:#00d800;"></div>
<div style="left:369.92px;top:153.6px;width:2.56px;height:42.75px;background:#00d800;"></div>
<div style="left:364.54px;top:172.93px;width:6.66px;height:2.3px;background:#00d800;"></div>
<div style="left:371.2px;top:155.01px;width:7.68px;height:2.3px;background:#00d800;"></div>
<div style="left:384.77px;top:153.6px;width:2.56px;height:34.05px;background:#00d800;"></div>
<div style="left:379.39px;top:155.01px;width:6.66px;height:2.3px;background:#00d800;"></div>
<div style="left:386.05px;top:186.5px;width:7.68px;height:2.3px;background:#00d800;"></div>
<div style="left:420.35px;top:136.7px;width:3.07px;height:1.02px;background:#ddd;"></div>
<div style="top:129.22px;height:16px;line-height:16px;font-size:11.2px;color:#f0f0f0;left:424.45px;transform:scaleX(0.87);transform-origin:0 50%;-webkit-text-stroke:.3px #f0f0f0;">69.810</div>
<div style="left:420.35px;top:171.01px;width:3.07px;height:1.02px;background:#ddd;"></div>
<div style="top:163.52px;height:16px;line-height:16px;font-size:11.2px;color:#f0f0f0;left:424.45px;transform:scaleX(0.87);transform-origin:0 50%;-webkit-text-stroke:.3px #f0f0f0;">69.770</div>
<div style="left:420.35px;top:205.82px;width:3.07px;height:1.02px;background:#ddd;"></div>
<div style="top:198.34px;height:16px;line-height:16px;font-size:11.2px;color:#f0f0f0;left:424.45px;transform:scaleX(0.87);transform-origin:0 50%;-webkit-text-stroke:.3px #f0f0f0;">69.730</div>
<div style="left:421.89px;top:184.32px;width:32.51px;height:9.73px;background:#8ea2ba;"></div>
<div style="top:181.18px;height:16px;line-height:16px;font-size:11.2px;color:#10161e;left:424.45px;transform:scaleX(0.87);transform-origin:0 50%;">69.750</div>
<div style="left:368.38px;top:249.09px;width:1.02px;height:3.07px;background:#ccc;"></div>
<div style="top:250.56px;height:16px;line-height:16px;font-size:11.2px;color:#f0f0f0;left:306.94px;transform:scaleX(0.865);transform-origin:0 50%;-webkit-text-stroke:.3px #f0f0f0;">25 Nov 2019</div>
<div style="top:250.56px;height:16px;line-height:16px;font-size:11.2px;color:#f0f0f0;left:370.94px;transform:scaleX(0.865);transform-origin:0 50%;-webkit-text-stroke:.3px #f0f0f0;">25 Nov 15:25</div>
<div style="left:477.7px;top:76.29px;width:172.54px;height:202.24px;background:#dbe6f4;border:1px solid #b4c3d6;border-radius:2px 2px 0 0;"></div>
<svg style="left:485.89px;top:84.99px;width:14.85px;height:16.9px;" viewBox="0 0 16 17"><rect x="1" y="1" width="11" height="9" rx="2" fill="#5db0f0" stroke="#2f86d3" stroke-width="1.2"/><rect x="3" y="5" width="12" height="10" rx="2" fill="#eaf4fd" stroke="#2f86d3" stroke-width="1.4"/><rect x="5.5" y="9" width="7" height="3.500" fill="#f08a3c"/></svg>
<div style="top:86.21px;height:16px;line-height:16px;font-size:12px;color:#a9adb3;left:504.83px;transform:scaleX(0.985);transform-origin:0 50%;">BEI,...</div>
<div style="left:541.18px;top:84.99px;width:30.72px;height:16.38px;background:linear-gradient(#e6eef8,#d6e2f1);border:1px solid #aebdd0;border-radius:2px;"></div>
<div style="left:550.4px;top:92.67px;width:12.29px;height:5.12px;background:#f4f7fb;border:1.5px solid #7a828e;border-radius:2px;"></div>
<div style="left:576px;top:84.99px;width:30.72px;height:16.38px;background:linear-gradient(#e6eef8,#d6e2f1);border:1px solid #aebdd0;border-radius:2px;"></div>
<div style="left:585.98px;top:88.58px;width:10.75px;height:8.7px;background:#f4f7fb;border:1px solid #7a828e;border-top-width:2px;"></div>
<div style="left:610.3px;top:84.99px;width:30.72px;height:16.38px;background:linear-gradient(#e6eef8,#d6e2f1);border:1px solid #aebdd0;border-radius:2px;"></div>
<svg style="left:620.54px;top:88.58px;width:10.24px;height:9.22px;" viewBox="0 0 10 9"><path d="M1 1L9 8M9 1L1 8" stroke="#7a828e" stroke-width="2"/></svg>
<div style="left:487.42px;top:104.96px;width:153.09px;height:163.84px;background:#000;overflow:hidden;"></div>
<div style="left:490.75px;top:108.29px;width:98.05px;height:140.03px;border:1px solid #9a9a9a;"></div>
<div style="left:517.89px;top:109.31px;width:1.02px;height:137.98px;background:repeating-linear-gradient(#5a6a7a 0 2px,transparent 2px 6px);"></div>
<div style="left:550.14px;top:109.31px;width:1.02px;height:137.98px;background:repeating-linear-gradient(#5a6a7a 0 2px,transparent 2px 6px);"></div>
<div style="left:582.4px;top:109.31px;width:1.02px;height:137.98px;background:repeating-linear-gradient(#5a6a7a 0 2px,transparent 2px 6px);"></div>
<div style="left:494.34px;top:112.64px;width:12.8px;height:12.29px;background:linear-gradient(90deg,#f1edff 0 28%,#ffb0b8 28% 52%,#f6f2ff 52% 72%,#b8b4ff 72%);border:1px solid #c9c4ff;"></div>
<div style="left:510.72px;top:112.64px;width:14.34px;height:12.29px;background:linear-gradient(90deg,#2238e0 0 48%,#f0eaff 48% 58%,#e83030 58%);border:1px solid #3040d0;"></div>
<div style="top:110.78px;height:16px;line-height:16px;font-size:11px;color:#fff;font-weight:bold;left:528.13px;transform:scaleX(0.82);transform-origin:0 50%;max-width:52.76px;overflow:hidden;">EA Builder MT5</div>
<svg style="left:571.39px;top:110.08px;width:15.87px;height:16.9px;" viewBox="0 0 16 16"><path d="M5 1h6l1 3H4Z" fill="#ddd"/><circle cx="8" cy="6" r="2.400" fill="#f0d0b0"/><path d="M2 15c0-4 2.500-6 6-6s6 2 6 6Z" fill="#7fb8e8"/><circle cx="11.500" cy="12" r="3.400" fill="#3fc23f"/><circle cx="5" cy="12.500" r="2.600" fill="#4aa0e8"/></svg>
<div style="top:124.86px;height:16px;line-height:16px;font-size:11.2px;color:#ffffff;left:494.34px;width:109.21px;overflow:hidden;transform:scaleX(0.865);transform-origin:0 50%;-webkit-text-stroke:.45px #fff;">Orders: 0, Tick executed: 119</div>
<div style="top:135.80px;height:16px;line-height:16px;font-size:11.2px;color:#ffffff;left:494.34px;width:109.21px;overflow:hidden;transform:scaleX(0.865);transform-origin:0 50%;-webkit-text-stroke:.45px #fff;">Balance: 10085.12Equity: 10085.01</div>
<div style="top:146.73px;height:16px;line-height:16px;font-size:11.2px;color:#ffffff;left:494.34px;width:109.21px;overflow:hidden;transform:scaleX(0.865);transform-origin:0 50%;-webkit-text-stroke:.45px #fff;">Orders open: 0, profit: 0.0, positions: 0</div>
<div style="top:157.66px;height:16px;line-height:16px;font-size:11.2px;color:#ffffff;left:494.34px;width:109.21px;overflow:hidden;transform:scaleX(0.865);transform-origin:0 50%;-webkit-text-stroke:.45px #fff;">Buy open: 0, profit: 0.0, positions: 0</div>
<div style="top:168.59px;height:16px;line-height:16px;font-size:11.2px;color:#ffffff;left:494.34px;width:109.21px;overflow:hidden;transform:scaleX(0.865);transform-origin:0 50%;-webkit-text-stroke:.45px #fff;">Sell open: 0, profit: 0.0, positions: 0</div>
<div style="top:179.52px;height:16px;line-height:16px;font-size:11.2px;color:#ffffff;left:494.34px;width:109.21px;overflow:hidden;transform:scaleX(0.865);transform-origin:0 50%;-webkit-text-stroke:.45px #fff;">Active indicators: Support and Resistance</div>
<div style="top:190.45px;height:16px;line-height:16px;font-size:11.2px;color:#ffffff;left:494.34px;width:109.21px;overflow:hidden;transform:scaleX(0.865);transform-origin:0 50%;-webkit-text-stroke:.45px #fff;">Trading hours: 0-24</div>
<div style="top:201.38px;height:16px;line-height:16px;font-size:11.2px;color:#ffffff;left:494.34px;width:109.21px;overflow:hidden;transform:scaleX(0.865);transform-origin:0 50%;-webkit-text-stroke:.45px #fff;">Can buy: true, Can sell:false</div>
<div style="left:504.58px;top:121.86px;width:2.56px;height:111.1px;background:#00d800;"></div>
<div style="left:499.2px;top:120.7px;width:6.66px;height:2.3px;background:#00d800;"></div>
<div style="left:505.86px;top:193.41px;width:7.68px;height:2.3px;background:#00d800;"></div>
<div style="left:520.96px;top:194.56px;width:2.56px;height:39.42px;background:#00d800;"></div>
<div style="left:515.58px;top:193.41px;width:6.66px;height:2.3px;background:#00d800;"></div>
<div style="left:522.24px;top:193.41px;width:7.68px;height:2.3px;background:#00d800;"></div>
<div style="left:537.86px;top:156.16px;width:2.56px;height:38.4px;background:#00d800;"></div>
<div style="left:532.48px;top:193.41px;width:6.66px;height:2.3px;background:#00d800;"></div>
<div style="left:539.14px;top:156.54px;width:7.68px;height:2.3px;background:#00d800;"></div>
<div style="left:552.7px;top:157.18px;width:2.56px;height:39.94px;background:#00d800;"></div>
<div style="left:547.33px;top:156.54px;width:6.66px;height:2.3px;background:#00d800;"></div>
<div style="left:553.98px;top:156.54px;width:7.68px;height:2.3px;background:#00d800;"></div>
<div style="left:568.06px;top:155.14px;width:2.56px;height:13.82px;background:#00d800;"></div>
<div style="left:562.69px;top:156.54px;width:6.66px;height:2.3px;background:#00d800;"></div>
<div style="left:569.34px;top:156.54px;width:7.68px;height:2.3px;background:#00d800;"></div>
<div style="left:588.8px;top:129.02px;width:3.07px;height:1.02px;background:#ddd;"></div>
<div style="top:121.54px;height:16px;line-height:16px;font-size:11.2px;color:#f0f0f0;left:592.90px;transform:scaleX(0.87);transform-origin:0 50%;-webkit-text-stroke:.3px #f0f0f0;">103.390</div>
<div style="left:588.8px;top:203.26px;width:3.07px;height:1.02px;background:#ddd;"></div>
<div style="top:195.78px;height:16px;line-height:16px;font-size:11.2px;color:#f0f0f0;left:592.90px;transform:scaleX(0.87);transform-origin:0 50%;-webkit-text-stroke:.3px #f0f0f0;">103.290</div>
<div style="left:590.34px;top:154.37px;width:37.25px;height:9.73px;background:#8ea2ba;"></div>
<div style="top:151.23px;height:16px;line-height:16px;font-size:11.2px;color:#10161e;left:592.90px;transform:scaleX(0.87);transform-origin:0 50%;">103.350</div>
<div style="left:550.66px;top:248.32px;width:1.02px;height:3.07px;background:#ccc;"></div>
<div style="top:249.79px;height:16px;line-height:16px;font-size:11.2px;color:#f0f0f0;left:489.22px;transform:scaleX(0.865);transform-origin:0 50%;-webkit-text-stroke:.3px #f0f0f0;">25 Nov 2019</div>
<div style="top:249.79px;height:16px;line-height:16px;font-size:11.2px;color:#f0f0f0;left:553.22px;transform:scaleX(0.865);transform-origin:0 50%;-webkit-text-stroke:.3px #f0f0f0;">25 Nov 15:25</div>
<div style="left:652.8px;top:77.31px;width:165.38px;height:201.22px;background:#dbe6f4;border:1px solid #b4c3d6;border-radius:2px 2px 0 0;"></div>
<svg style="left:660.99px;top:86.02px;width:14.85px;height:16.9px;" viewBox="0 0 16 17"><rect x="1" y="1" width="11" height="9" rx="2" fill="#5db0f0" stroke="#2f86d3" stroke-width="1.2"/><rect x="3" y="5" width="12" height="10" rx="2" fill="#eaf4fd" stroke="#2f86d3" stroke-width="1.4"/><rect x="5.5" y="9" width="7" height="3.500" fill="#f08a3c"/></svg>
<div style="top:87.23px;height:16px;line-height:16px;font-size:12px;color:#a9adb3;left:679.94px;transform:scaleX(0.985);transform-origin:0 50%;">BM...</div>
<div style="left:710.14px;top:86.02px;width:30.72px;height:16.38px;background:linear-gradient(#e6eef8,#d6e2f1);border:1px solid #aebdd0;border-radius:2px;"></div>
<div style="left:719.36px;top:93.7px;width:12.29px;height:5.12px;background:#f4f7fb;border:1.5px solid #7a828e;border-radius:2px;"></div>
<div style="left:747.52px;top:86.02px;width:30.72px;height:16.38px;background:linear-gradient(#e6eef8,#d6e2f1);border:1px solid #aebdd0;border-radius:2px;"></div>
<div style="left:757.5px;top:89.6px;width:10.75px;height:8.7px;background:#f4f7fb;border:1px solid #7a828e;border-top-width:2px;"></div>
<div style="left:784.38px;top:86.02px;width:30.72px;height:16.38px;background:linear-gradient(#e6eef8,#d6e2f1);border:1px solid #aebdd0;border-radius:2px;"></div>
<svg style="left:794.62px;top:89.6px;width:10.24px;height:9.22px;" viewBox="0 0 10 9"><path d="M1 1L9 8M9 1L1 8" stroke="#7a828e" stroke-width="2"/></svg>
<div style="left:658.94px;top:107.01px;width:152.58px;height:161.28px;background:#000;overflow:hidden;"></div>
<div style="left:662.27px;top:110.34px;width:103.17px;height:137.98px;border:1px solid #9a9a9a;"></div>
<div style="left:689.41px;top:111.36px;width:1.02px;height:135.94px;background:repeating-linear-gradient(#5a6a7a 0 2px,transparent 2px 6px);"></div>
<div style="left:721.66px;top:111.36px;width:1.02px;height:135.94px;background:repeating-linear-gradient(#5a6a7a 0 2px,transparent 2px 6px);"></div>
<div style="left:753.92px;top:111.36px;width:1.02px;height:135.94px;background:repeating-linear-gradient(#5a6a7a 0 2px,transparent 2px 6px);"></div>
<div style="left:665.86px;top:114.69px;width:12.8px;height:12.29px;background:linear-gradient(90deg,#f1edff 0 28%,#ffb0b8 28% 52%,#f6f2ff 52% 72%,#b8b4ff 72%);border:1px solid #c9c4ff;"></div>
<div style="left:682.24px;top:114.69px;width:14.34px;height:12.29px;background:linear-gradient(90deg,#2238e0 0 48%,#f0eaff 48% 58%,#e83030 58%);border:1px solid #3040d0;"></div>
<div style="top:112.83px;height:16px;line-height:16px;font-size:11px;color:#fff;font-weight:bold;left:699.65px;transform:scaleX(0.82);transform-origin:0 50%;max-width:59px;overflow:hidden;">EA Builder MT5</div>
<svg style="left:748.03px;top:112.13px;width:15.87px;height:16.9px;" viewBox="0 0 16 16"><path d="M5 1h6l1 3H4Z" fill="#ddd"/><circle cx="8" cy="6" r="2.400" fill="#f0d0b0"/><path d="M2 15c0-4 2.500-6 6-6s6 2 6 6Z" fill="#7fb8e8"/><circle cx="11.500" cy="12" r="3.400" fill="#3fc23f"/><circle cx="5" cy="12.500" r="2.600" fill="#4aa0e8"/></svg>
<div style="top:126.91px;height:16px;line-height:16px;font-size:11.2px;color:#ffffff;left:665.86px;width:115.13px;overflow:hidden;transform:scaleX(0.865);transform-origin:0 50%;-webkit-text-stroke:.45px #fff;">Orders: 0, Tick executed: 119</div>
<div style="top:137.84px;height:16px;line-height:16px;font-size:11.2px;color:#ffffff;left:665.86px;width:115.13px;overflow:hidden;transform:scaleX(0.865);transform-origin:0 50%;-webkit-text-stroke:.45px #fff;">Balance: 10085.12Equity: 10085.01</div>
<div style="top:148.77px;height:16px;line-height:16px;font-size:11.2px;color:#ffffff;left:665.86px;width:115.13px;overflow:hidden;transform:scaleX(0.865);transform-origin:0 50%;-webkit-text-stroke:.45px #fff;">Orders open: 0, profit: 0.0, positions: 0</div>
<div style="top:159.71px;height:16px;line-height:16px;font-size:11.2px;color:#ffffff;left:665.86px;width:115.13px;overflow:hidden;transform:scaleX(0.865);transform-origin:0 50%;-webkit-text-stroke:.45px #fff;">Buy open: 0, profit: 0.0, positions: 0</div>
<div style="top:170.64px;height:16px;line-height:16px;font-size:11.2px;color:#ffffff;left:665.86px;width:115.13px;overflow:hidden;transform:scaleX(0.865);transform-origin:0 50%;-webkit-text-stroke:.45px #fff;">Sell open: 0, profit: 0.0, positions: 0</div>
<div style="top:181.57px;height:16px;line-height:16px;font-size:11.2px;color:#ffffff;left:665.86px;width:115.13px;overflow:hidden;transform:scaleX(0.865);transform-origin:0 50%;-webkit-text-stroke:.45px #fff;">Active indicators: Support and Resistance</div>
<div style="top:192.50px;height:16px;line-height:16px;font-size:11.2px;color:#ffffff;left:665.86px;width:115.13px;overflow:hidden;transform:scaleX(0.865);transform-origin:0 50%;-webkit-text-stroke:.45px #fff;">Trading hours: 0-24</div>
<div style="top:203.43px;height:16px;line-height:16px;font-size:11.2px;color:#ffffff;left:665.86px;width:115.13px;overflow:hidden;transform:scaleX(0.865);transform-origin:0 50%;-webkit-text-stroke:.45px #fff;">Can buy: true, Can sell:false</div>
<div style="left:674.56px;top:176.64px;width:2.56px;height:42.5px;background:#00d800;"></div>
<div style="left:669.18px;top:183.17px;width:6.66px;height:2.3px;background:#00d800;"></div>
<div style="left:675.84px;top:178.05px;width:7.68px;height:2.3px;background:#00d800;"></div>
<div style="left:691.46px;top:133.12px;width:2.56px;height:53.76px;background:#00d800;"></div>
<div style="left:686.08px;top:178.05px;width:6.66px;height:2.3px;background:#00d800;"></div>
<div style="left:692.74px;top:139.65px;width:7.68px;height:2.3px;background:#00d800;"></div>
<div style="left:706.3px;top:122.88px;width:2.56px;height:23.04px;background:#00d800;"></div>
<div style="left:700.93px;top:139.65px;width:6.66px;height:2.3px;background:#00d800;"></div>
<div style="left:707.58px;top:142.21px;width:7.68px;height:2.3px;background:#00d800;"></div>
<div style="left:723.2px;top:143.36px;width:2.56px;height:38.4px;background:#00d800;"></div>
<div style="left:717.82px;top:142.21px;width:6.66px;height:2.3px;background:#00d800;"></div>
<div style="left:724.48px;top:152.45px;width:7.68px;height:2.3px;background:#00d800;"></div>
<div style="left:739.58px;top:140.8px;width:2.56px;height:16.9px;background:#00d800;"></div>
<div style="left:734.21px;top:152.45px;width:6.66px;height:2.3px;background:#00d800;"></div>
<div style="left:740.86px;top:144.77px;width:7.68px;height:2.3px;background:#00d800;"></div>
<div style="left:755.97px;top:145.92px;width:2.56px;height:16.64px;background:#00d800;"></div>
<div style="left:750.59px;top:144.77px;width:6.66px;height:2.3px;background:#00d800;"></div>
<div style="left:757.25px;top:157.57px;width:7.68px;height:2.3px;background:#00d800;"></div>
<div style="left:765.44px;top:143.87px;width:3.07px;height:1.02px;background:#ddd;"></div>
<div style="top:136.38px;height:16px;line-height:16px;font-size:11.2px;color:#f0f0f0;left:769.54px;transform:scaleX(0.87);transform-origin:0 50%;-webkit-text-stroke:.3px #f0f0f0;">74.220</div>
<div style="left:765.44px;top:176.9px;width:3.07px;height:1.02px;background:#ddd;"></div>
<div style="top:169.41px;height:16px;line-height:16px;font-size:11.2px;color:#f0f0f0;left:769.54px;transform:scaleX(0.87);transform-origin:0 50%;-webkit-text-stroke:.3px #f0f0f0;">74.140</div>
<div style="left:765.44px;top:211.2px;width:3.07px;height:1.02px;background:#ddd;"></div>
<div style="top:203.71px;height:16px;line-height:16px;font-size:11.2px;color:#f0f0f0;left:769.54px;transform:scaleX(0.87);transform-origin:0 50%;-webkit-text-stroke:.3px #f0f0f0;">74.060</div>
<div style="left:766.98px;top:156.42px;width:32.51px;height:9.73px;background:#8ea2ba;"></div>
<div style="top:153.28px;height:16px;line-height:16px;font-size:11.2px;color:#10161e;left:769.54px;transform:scaleX(0.87);transform-origin:0 50%;">74.180</div>
<div style="left:722.18px;top:248.32px;width:1.02px;height:3.07px;background:#ccc;"></div>
<div style="top:249.79px;height:16px;line-height:16px;font-size:11.2px;color:#f0f0f0;left:660.74px;transform:scaleX(0.865);transform-origin:0 50%;-webkit-text-stroke:.3px #f0f0f0;">25 Nov 2019</div>
<div style="top:249.79px;height:16px;line-height:16px;font-size:11.2px;color:#f0f0f0;left:724.74px;transform:scaleX(0.865);transform-origin:0 50%;-webkit-text-stroke:.3px #f0f0f0;">25 Nov 15:25</div>
<div style="left:821.76px;top:77.31px;width:179.71px;height:201.22px;background:#dbe6f4;border:1px solid #b4c3d6;border-radius:2px 2px 0 0;"></div>
<svg style="left:829.95px;top:86.02px;width:14.85px;height:16.9px;" viewBox="0 0 16 17"><rect x="1" y="1" width="11" height="9" rx="2" fill="#5db0f0" stroke="#2f86d3" stroke-width="1.2"/><rect x="3" y="5" width="12" height="10" rx="2" fill="#eaf4fd" stroke="#2f86d3" stroke-width="1.4"/><rect x="5.5" y="9" width="7" height="3.500" fill="#f08a3c"/></svg>
<div style="top:87.23px;height:16px;line-height:16px;font-size:12px;color:#a9adb3;left:848.90px;transform:scaleX(0.985);transform-origin:0 50%;">DAI,M5</div>
<div style="left:894.98px;top:86.02px;width:30.72px;height:16.38px;background:linear-gradient(#e6eef8,#d6e2f1);border:1px solid #aebdd0;border-radius:2px;"></div>
<div style="left:904.19px;top:93.7px;width:12.29px;height:5.12px;background:#f4f7fb;border:1.5px solid #7a828e;border-radius:2px;"></div>
<div style="left:929.79px;top:86.02px;width:30.72px;height:16.38px;background:linear-gradient(#e6eef8,#d6e2f1);border:1px solid #aebdd0;border-radius:2px;"></div>
<div style="left:939.78px;top:89.6px;width:10.75px;height:8.7px;background:#f4f7fb;border:1px solid #7a828e;border-top-width:2px;"></div>
<div style="left:964.61px;top:86.02px;width:30.72px;height:16.38px;background:linear-gradient(#e6eef8,#d6e2f1);border:1px solid #aebdd0;border-radius:2px;"></div>
<svg style="left:974.85px;top:89.6px;width:10.24px;height:9.22px;" viewBox="0 0 10 9"><path d="M1 1L9 8M9 1L1 8" stroke="#7a828e" stroke-width="2"/></svg>
<div style="left:827.9px;top:107.01px;width:166.4px;height:161.28px;background:#000;overflow:hidden;"></div>
<div style="left:831.23px;top:110.34px;width:114.94px;height:137.98px;border:1px solid #9a9a9a;"></div>
<div style="left:858.37px;top:111.36px;width:1.02px;height:135.94px;background:repeating-linear-gradient(#5a6a7a 0 2px,transparent 2px 6px);"></div>
<div style="left:890.62px;top:111.36px;width:1.02px;height:135.94px;background:repeating-linear-gradient(#5a6a7a 0 2px,transparent 2px 6px);"></div>
<div style="left:922.88px;top:111.36px;width:1.02px;height:135.94px;background:repeating-linear-gradient(#5a6a7a 0 2px,transparent 2px 6px);"></div>
<div style="left:834.82px;top:114.69px;width:12.8px;height:12.29px;background:linear-gradient(90deg,#f1edff 0 28%,#ffb0b8 28% 52%,#f6f2ff 52% 72%,#b8b4ff 72%);border:1px solid #c9c4ff;"></div>
<div style="left:851.2px;top:114.69px;width:14.34px;height:12.29px;background:linear-gradient(90deg,#2238e0 0 48%,#f0eaff 48% 58%,#e83030 58%);border:1px solid #3040d0;"></div>
<div style="top:112.83px;height:16px;line-height:16px;font-size:11px;color:#fff;font-weight:bold;left:868.61px;transform:scaleX(0.82);transform-origin:0 50%;max-width:73.37px;overflow:hidden;">EA Builder MT5</div>
<svg style="left:928.77px;top:112.13px;width:15.87px;height:16.9px;" viewBox="0 0 16 16"><path d="M5 1h6l1 3H4Z" fill="#ddd"/><circle cx="8" cy="6" r="2.400" fill="#f0d0b0"/><path d="M2 15c0-4 2.500-6 6-6s6 2 6 6Z" fill="#7fb8e8"/><circle cx="11.500" cy="12" r="3.400" fill="#3fc23f"/><circle cx="5" cy="12.500" r="2.600" fill="#4aa0e8"/></svg>
<div style="top:126.91px;height:16px;line-height:16px;font-size:11.2px;color:#ffffff;left:834.82px;width:128.74px;overflow:hidden;transform:scaleX(0.865);transform-origin:0 50%;-webkit-text-stroke:.45px #fff;">Orders: 0, Tick executed: 119</div>
<div style="top:137.84px;height:16px;line-height:16px;font-size:11.2px;color:#ffffff;left:834.82px;width:128.74px;overflow:hidden;transform:scaleX(0.865);transform-origin:0 50%;-webkit-text-stroke:.45px #fff;">Balance: 10085.12Equity: 10085.01</div>
<div style="top:148.77px;height:16px;line-height:16px;font-size:11.2px;color:#ffffff;left:834.82px;width:128.74px;overflow:hidden;transform:scaleX(0.865);transform-origin:0 50%;-webkit-text-stroke:.45px #fff;">Orders open: 0, profit: 0.0, positions: 0</div>
<div style="top:159.71px;height:16px;line-height:16px;font-size:11.2px;color:#ffffff;left:834.82px;width:128.74px;overflow:hidden;transform:scaleX(0.865);transform-origin:0 50%;-webkit-text-stroke:.45px #fff;">Buy open: 0, profit: 0.0, positions: 0</div>
<div style="top:170.64px;height:16px;line-height:16px;font-size:11.2px;color:#ffffff;left:834.82px;width:128.74px;overflow:hidden;transform:scaleX(0.865);transform-origin:0 50%;-webkit-text-stroke:.45px #fff;">Sell open: 0, profit: 0.0, positions: 0</div>
<div style="top:181.57px;height:16px;line-height:16px;font-size:11.2px;color:#ffffff;left:834.82px;width:128.74px;overflow:hidden;transform:scaleX(0.865);transform-origin:0 50%;-webkit-text-stroke:.45px #fff;">Active indicators: Support and Resistance</div>
<div style="top:192.50px;height:16px;line-height:16px;font-size:11.2px;color:#ffffff;left:834.82px;width:128.74px;overflow:hidden;transform:scaleX(0.865);transform-origin:0 50%;-webkit-text-stroke:.45px #fff;">Trading hours: 0-24</div>
<div style="top:203.43px;height:16px;line-height:16px;font-size:11.2px;color:#ffffff;left:834.82px;width:128.74px;overflow:hidden;transform:scaleX(0.865);transform-origin:0 50%;-webkit-text-stroke:.45px #fff;">Can buy: true, Can sell:false</div>
<div style="left:844.54px;top:167.68px;width:2.56px;height:68.86px;background:#00d800;"></div>
<div style="left:839.17px;top:175.49px;width:6.66px;height:2.3px;background:#00d800;"></div>
<div style="left:845.82px;top:172.93px;width:7.68px;height:2.3px;background:#00d800;"></div>
<div style="left:860.42px;top:152.83px;width:2.56px;height:41.73px;background:#00d800;"></div>
<div style="left:855.04px;top:172.93px;width:6.66px;height:2.3px;background:#00d800;"></div>
<div style="left:861.7px;top:157.57px;width:7.68px;height:2.3px;background:#00d800;"></div>
<div style="left:877.31px;top:117.76px;width:2.56px;height:59.65px;background:#00d800;"></div>
<div style="left:871.94px;top:157.57px;width:6.66px;height:2.3px;background:#00d800;"></div>
<div style="left:878.59px;top:121.73px;width:7.68px;height:2.3px;background:#00d800;"></div>
<div style="left:893.7px;top:120.32px;width:2.56px;height:69.12px;background:#00d800;"></div>
<div style="left:888.32px;top:121.73px;width:6.66px;height:2.3px;background:#00d800;"></div>
<div style="left:894.98px;top:167.81px;width:7.68px;height:2.3px;background:#00d800;"></div>
<div style="left:909.57px;top:155.39px;width:2.56px;height:26.37px;background:#00d800;"></div>
<div style="left:904.19px;top:167.81px;width:6.66px;height:2.3px;background:#00d800;"></div>
<div style="left:910.85px;top:172.93px;width:7.68px;height:2.3px;background:#00d800;"></div>
<div style="left:925.95px;top:160.26px;width:2.56px;height:21.5px;background:#00d800;"></div>
<div style="left:920.58px;top:172.93px;width:6.66px;height:2.3px;background:#00d800;"></div>
<div style="left:927.23px;top:178.05px;width:7.68px;height:2.3px;background:#00d800;"></div>
<div style="left:946.18px;top:141.57px;width:3.07px;height:1.02px;background:#ddd;"></div>
<div style="top:134.08px;height:16px;line-height:16px;font-size:11.2px;color:#f0f0f0;left:950.27px;transform:scaleX(0.87);transform-origin:0 50%;-webkit-text-stroke:.3px #f0f0f0;">52.790</div>
<div style="left:946.18px;top:174.08px;width:3.07px;height:1.02px;background:#ddd;"></div>
<div style="top:166.59px;height:16px;line-height:16px;font-size:11.2px;color:#f0f0f0;left:950.27px;transform:scaleX(0.87);transform-origin:0 50%;-webkit-text-stroke:.3px #f0f0f0;">52.740</div>
<div style="left:946.18px;top:208.9px;width:3.07px;height:1.02px;background:#ddd;"></div>
<div style="top:201.41px;height:16px;line-height:16px;font-size:11.2px;color:#f0f0f0;left:950.27px;transform:scaleX(0.87);transform-origin:0 50%;-webkit-text-stroke:.3px #f0f0f0;">52.690</div>
<div style="left:947.71px;top:176.38px;width:32.51px;height:9.73px;background:#8ea2ba;"></div>
<div style="top:173.25px;height:16px;line-height:16px;font-size:11.2px;color:#10161e;left:950.27px;transform:scaleX(0.87);transform-origin:0 50%;">52.730</div>
<div style="left:891.14px;top:248.32px;width:1.02px;height:3.07px;background:#ccc;"></div>
<div style="top:249.79px;height:16px;line-height:16px;font-size:11.2px;color:#f0f0f0;left:829.70px;transform:scaleX(0.865);transform-origin:0 50%;-webkit-text-stroke:.3px #f0f0f0;">25 Nov 2019</div>
<div style="top:249.79px;height:16px;line-height:16px;font-size:11.2px;color:#f0f0f0;left:893.70px;transform:scaleX(0.865);transform-origin:0 50%;-webkit-text-stroke:.3px #f0f0f0;">25 Nov 15:20</div>
<div style="left:1005.57px;top:77.31px;width:174.59px;height:201.22px;background:#dbe6f4;border:1px solid #b4c3d6;border-radius:2px 2px 0 0;"></div>
<svg style="left:1013.76px;top:86.02px;width:14.85px;height:16.9px;" viewBox="0 0 16 17"><rect x="1" y="1" width="11" height="9" rx="2" fill="#5db0f0" stroke="#2f86d3" stroke-width="1.2"/><rect x="3" y="5" width="12" height="10" rx="2" fill="#eaf4fd" stroke="#2f86d3" stroke-width="1.4"/><rect x="5.5" y="9" width="7" height="3.500" fill="#f08a3c"/></svg>
<div style="top:87.23px;height:16px;line-height:16px;font-size:12px;color:#a9adb3;left:1032.70px;transform:scaleX(0.985);transform-origin:0 50%;">FME,...</div>
<div style="left:1072.64px;top:86.02px;width:30.72px;height:16.38px;background:linear-gradient(#e6eef8,#d6e2f1);border:1px solid #aebdd0;border-radius:2px;"></div>
<div style="left:1081.86px;top:93.7px;width:12.29px;height:5.12px;background:#f4f7fb;border:1.5px solid #7a828e;border-radius:2px;"></div>
<div style="left:1107.97px;top:86.02px;width:30.72px;height:16.38px;background:linear-gradient(#e6eef8,#d6e2f1);border:1px solid #aebdd0;border-radius:2px;"></div>
<div style="left:1117.95px;top:89.6px;width:10.75px;height:8.7px;background:#f4f7fb;border:1px solid #7a828e;border-top-width:2px;"></div>
<div style="left:1142.78px;top:86.02px;width:30.72px;height:16.38px;background:linear-gradient(#e6eef8,#d6e2f1);border:1px solid #aebdd0;border-radius:2px;"></div>
<svg style="left:1153.02px;top:89.6px;width:10.24px;height:9.22px;" viewBox="0 0 10 9"><path d="M1 1L9 8M9 1L1 8" stroke="#7a828e" stroke-width="2"/></svg>
<div style="left:1012.22px;top:107.01px;width:160.77px;height:161.54px;background:#000;overflow:hidden;"></div>
<div style="left:1015.55px;top:110.34px;width:110.85px;height:139.01px;border:1px solid #9a9a9a;"></div>
<div style="left:1042.69px;top:111.36px;width:1.02px;height:136.96px;background:repeating-linear-gradient(#5a6a7a 0 2px,transparent 2px 6px);"></div>
<div style="left:1074.94px;top:111.36px;width:1.02px;height:136.96px;background:repeating-linear-gradient(#5a6a7a 0 2px,transparent 2px 6px);"></div>
<div style="left:1107.2px;top:111.36px;width:1.02px;height:136.96px;background:repeating-linear-gradient(#5a6a7a 0 2px,transparent 2px 6px);"></div>
<div style="left:1019.14px;top:114.69px;width:12.8px;height:12.29px;background:linear-gradient(90deg,#f1edff 0 28%,#ffb0b8 28% 52%,#f6f2ff 52% 72%,#b8b4ff 72%);border:1px solid #c9c4ff;"></div>
<div style="left:1035.52px;top:114.69px;width:14.34px;height:12.29px;background:linear-gradient(90deg,#2238e0 0 48%,#f0eaff 48% 58%,#e83030 58%);border:1px solid #3040d0;"></div>
<div style="top:112.83px;height:16px;line-height:16px;font-size:11px;color:#fff;font-weight:bold;left:1052.93px;transform:scaleX(0.82);transform-origin:0 50%;max-width:68.37px;overflow:hidden;">EA Builder MT5</div>
<svg style="left:1108.99px;top:112.13px;width:15.87px;height:16.9px;" viewBox="0 0 16 16"><path d="M5 1h6l1 3H4Z" fill="#ddd"/><circle cx="8" cy="6" r="2.400" fill="#f0d0b0"/><path d="M2 15c0-4 2.500-6 6-6s6 2 6 6Z" fill="#7fb8e8"/><circle cx="11.500" cy="12" r="3.400" fill="#3fc23f"/><circle cx="5" cy="12.500" r="2.600" fill="#4aa0e8"/></svg>
<div style="top:126.91px;height:16px;line-height:16px;font-size:11.2px;color:#ffffff;left:1019.14px;width:124.00px;overflow:hidden;transform:scaleX(0.865);transform-origin:0 50%;-webkit-text-stroke:.45px #fff;">Orders: 0, Tick executed: 119</div>
<div style="top:137.84px;height:16px;line-height:16px;font-size:11.2px;color:#ffffff;left:1019.14px;width:124.00px;overflow:hidden;transform:scaleX(0.865);transform-origin:0 50%;-webkit-text-stroke:.45px #fff;">Balance: 10085.12Equity: 10085.01</div>
<div style="top:148.77px;height:16px;line-height:16px;font-size:11.2px;color:#ffffff;left:1019.14px;width:124.00px;overflow:hidden;transform:scaleX(0.865);transform-origin:0 50%;-webkit-text-stroke:.45px #fff;">Orders open: 0, profit: 0.0, positions: 0</div>
<div style="top:159.71px;height:16px;line-height:16px;font-size:11.2px;color:#ffffff;left:1019.14px;width:124.00px;overflow:hidden;transform:scaleX(0.865);transform-origin:0 50%;-webkit-text-stroke:.45px #fff;">Buy open: 0, profit: 0.0, positions: 0</div>
<div style="top:170.64px;height:16px;line-height:16px;font-size:11.2px;color:#ffffff;left:1019.14px;width:124.00px;overflow:hidden;transform:scaleX(0.865);transform-origin:0 50%;-webkit-text-stroke:.45px #fff;">Sell open: 0, profit: 0.0, positions: 0</div>
<div style="top:181.57px;height:16px;line-height:16px;font-size:11.2px;color:#ffffff;left:1019.14px;width:124.00px;overflow:hidden;transform:scaleX(0.865);transform-origin:0 50%;-webkit-text-stroke:.45px #fff;">Active indicators: Support and Resistance</div>
<div style="top:192.50px;height:16px;line-height:16px;font-size:11.2px;color:#ffffff;left:1019.14px;width:124.00px;overflow:hidden;transform:scaleX(0.865);transform-origin:0 50%;-webkit-text-stroke:.45px #fff;">Trading hours: 0-24</div>
<div style="top:203.43px;height:16px;line-height:16px;font-size:11.2px;color:#ffffff;left:1019.14px;width:124.00px;overflow:hidden;transform:scaleX(0.865);transform-origin:0 50%;-webkit-text-stroke:.45px #fff;">Can buy: true, Can sell:false</div>
<div style="left:1018.11px;top:176.64px;width:2.56px;height:17.92px;background:#00d800;"></div>
<div style="left:1012.74px;top:190.85px;width:6.66px;height:2.3px;background:#00d800;"></div>
<div style="left:1019.39px;top:178.05px;width:7.68px;height:2.3px;background:#00d800;"></div>
<div style="left:1032.45px;top:135.68px;width:2.56px;height:53.76px;background:#00d800;"></div>
<div style="left:1027.07px;top:178.05px;width:6.66px;height:2.3px;background:#00d800;"></div>
<div style="left:1033.73px;top:139.65px;width:7.68px;height:2.3px;background:#00d800;"></div>
<div style="left:1047.3px;top:122.88px;width:2.56px;height:49.66px;background:#00d800;"></div>
<div style="left:1041.92px;top:139.65px;width:6.66px;height:2.3px;background:#00d800;"></div>
<div style="left:1048.58px;top:165.25px;width:7.68px;height:2.3px;background:#00d800;"></div>
<div style="left:1063.17px;top:122.88px;width:2.56px;height:69.12px;background:#00d800;"></div>
<div style="left:1057.79px;top:165.25px;width:6.66px;height:2.3px;background:#00d800;"></div>
<div style="left:1064.45px;top:126.85px;width:7.68px;height:2.3px;background:#00d800;"></div>
<div style="left:1079.55px;top:120.32px;width:2.56px;height:27.65px;background:#00d800;"></div>
<div style="left:1074.18px;top:126.85px;width:6.66px;height:2.3px;background:#00d800;"></div>
<div style="left:1080.83px;top:142.21px;width:7.68px;height:2.3px;background:#00d800;"></div>
<div style="left:1095.42px;top:150.53px;width:2.56px;height:44.03px;background:#00d800;"></div>
<div style="left:1090.05px;top:152.45px;width:6.66px;height:2.3px;background:#00d800;"></div>
<div style="left:1096.7px;top:188.29px;width:7.68px;height:2.3px;background:#00d800;"></div>
<div style="left:1126.4px;top:118.02px;width:3.07px;height:1.02px;background:#ddd;"></div>
<div style="top:110.53px;height:16px;line-height:16px;font-size:11.2px;color:#f0f0f0;left:1130.50px;transform:scaleX(0.87);transform-origin:0 50%;-webkit-text-stroke:.3px #f0f0f0;">67.006</div>
<div style="left:1126.4px;top:148.99px;width:3.07px;height:1.02px;background:#ddd;"></div>
<div style="top:141.50px;height:16px;line-height:16px;font-size:11.2px;color:#f0f0f0;left:1130.50px;transform:scaleX(0.87);transform-origin:0 50%;-webkit-text-stroke:.3px #f0f0f0;">66.978</div>
<div style="left:1126.4px;top:182.53px;width:3.07px;height:1.02px;background:#ddd;"></div>
<div style="top:175.04px;height:16px;line-height:16px;font-size:11.2px;color:#f0f0f0;left:1130.50px;transform:scaleX(0.87);transform-origin:0 50%;-webkit-text-stroke:.3px #f0f0f0;">66.950</div>
<div style="left:1126.4px;top:215.04px;width:3.07px;height:1.02px;background:#ddd;"></div>
<div style="top:207.55px;height:16px;line-height:16px;font-size:11.2px;color:#f0f0f0;left:1130.50px;transform:scaleX(0.87);transform-origin:0 50%;-webkit-text-stroke:.3px #f0f0f0;">66.922</div>
<div style="left:1127.94px;top:167.17px;width:32.51px;height:9.73px;background:#8ea2ba;"></div>
<div style="top:164.03px;height:16px;line-height:16px;font-size:11.2px;color:#10161e;left:1130.50px;transform:scaleX(0.87);transform-origin:0 50%;">66.960</div>
<div style="left:1075.46px;top:249.34px;width:1.02px;height:3.07px;background:#ccc;"></div>
<div style="top:250.82px;height:16px;line-height:16px;font-size:11.2px;color:#f0f0f0;left:1014.02px;transform:scaleX(0.865);transform-origin:0 50%;-webkit-text-stroke:.3px #f0f0f0;">25 Nov 2019</div>
<div style="top:250.82px;height:16px;line-height:16px;font-size:11.2px;color:#f0f0f0;left:1078.02px;transform:scaleX(0.865);transform-origin:0 50%;-webkit-text-stroke:.3px #f0f0f0;">25 Nov 15:20</div>
<div style="left:1184.26px;top:79.36px;width:171.01px;height:199.17px;background:#dbe6f4;border:1px solid #b4c3d6;border-radius:2px 2px 0 0;"></div>
<svg style="left:1192.45px;top:88.06px;width:14.85px;height:16.9px;" viewBox="0 0 16 17"><rect x="1" y="1" width="11" height="9" rx="2" fill="#5db0f0" stroke="#2f86d3" stroke-width="1.2"/><rect x="3" y="5" width="12" height="10" rx="2" fill="#eaf4fd" stroke="#2f86d3" stroke-width="1.4"/><rect x="5.5" y="9" width="7" height="3.500" fill="#f08a3c"/></svg>
<div style="top:89.28px;height:16px;line-height:16px;font-size:12px;color:#a9adb3;left:1211.39px;transform:scaleX(0.985);transform-origin:0 50%;">HEI,...</div>
<div style="left:1246.72px;top:88.06px;width:30.72px;height:16.38px;background:linear-gradient(#e6eef8,#d6e2f1);border:1px solid #aebdd0;border-radius:2px;"></div>
<div style="left:1255.94px;top:95.74px;width:12.29px;height:5.12px;background:#f4f7fb;border:1.5px solid #7a828e;border-radius:2px;"></div>
<div style="left:1282.05px;top:88.06px;width:30.72px;height:16.38px;background:linear-gradient(#e6eef8,#d6e2f1);border:1px solid #aebdd0;border-radius:2px;"></div>
<div style="left:1292.03px;top:91.65px;width:10.75px;height:8.7px;background:#f4f7fb;border:1px solid #7a828e;border-top-width:2px;"></div>
<div style="left:1316.86px;top:88.06px;width:30.72px;height:16.38px;background:linear-gradient(#e6eef8,#d6e2f1);border:1px solid #aebdd0;border-radius:2px;"></div>
<svg style="left:1327.1px;top:91.65px;width:10.24px;height:9.22px;" viewBox="0 0 10 9"><path d="M1 1L9 8M9 1L1 8" stroke="#7a828e" stroke-width="2"/></svg>
<div style="left:1190.4px;top:110.08px;width:157.7px;height:161.02px;background:#000;overflow:hidden;"></div>
<div style="left:1193.73px;top:113.41px;width:107.26px;height:137.47px;border:1px solid #9a9a9a;"></div>
<div style="left:1220.86px;top:114.43px;width:1.02px;height:135.42px;background:repeating-linear-gradient(#5a6a7a 0 2px,transparent 2px 6px);"></div>
<div style="left:1253.12px;top:114.43px;width:1.02px;height:135.42px;background:repeating-linear-gradient(#5a6a7a 0 2px,transparent 2px 6px);"></div>
<div style="left:1285.38px;top:114.43px;width:1.02px;height:135.42px;background:repeating-linear-gradient(#5a6a7a 0 2px,transparent 2px 6px);"></div>
<div style="left:1197.31px;top:117.76px;width:12.8px;height:12.29px;background:linear-gradient(90deg,#f1edff 0 28%,#ffb0b8 28% 52%,#f6f2ff 52% 72%,#b8b4ff 72%);border:1px solid #c9c4ff;"></div>
<div style="left:1213.7px;top:117.76px;width:14.34px;height:12.29px;background:linear-gradient(90deg,#2238e0 0 48%,#f0eaff 48% 58%,#e83030 58%);border:1px solid #3040d0;"></div>
<div style="top:115.90px;height:16px;line-height:16px;font-size:11px;color:#fff;font-weight:bold;left:1231.10px;transform:scaleX(0.82);transform-origin:0 50%;max-width:64px;overflow:hidden;">EA Builder MT5</div>
<svg style="left:1283.58px;top:115.2px;width:15.87px;height:16.9px;" viewBox="0 0 16 16"><path d="M5 1h6l1 3H4Z" fill="#ddd"/><circle cx="8" cy="6" r="2.400" fill="#f0d0b0"/><path d="M2 15c0-4 2.500-6 6-6s6 2 6 6Z" fill="#7fb8e8"/><circle cx="11.500" cy="12" r="3.400" fill="#3fc23f"/><circle cx="5" cy="12.500" r="2.600" fill="#4aa0e8"/></svg>
<div style="top:129.98px;height:16px;line-height:16px;font-size:11.2px;color:#ffffff;left:1197.31px;width:119.86px;overflow:hidden;transform:scaleX(0.865);transform-origin:0 50%;-webkit-text-stroke:.45px #fff;">Orders: 1, Tick executed: 119</div>
<div style="top:140.92px;height:16px;line-height:16px;font-size:11.2px;color:#ffffff;left:1197.31px;width:119.86px;overflow:hidden;transform:scaleX(0.865);transform-origin:0 50%;-webkit-text-stroke:.45px #fff;">Balance: 10085.12Equity: 10085.01</div>
<div style="top:151.85px;height:16px;line-height:16px;font-size:11.2px;color:#ffffff;left:1197.31px;width:119.86px;overflow:hidden;transform:scaleX(0.865);transform-origin:0 50%;-webkit-text-stroke:.45px #fff;">Orders open: 0, profit: 0.0, positions: 0</div>
<div style="top:162.78px;height:16px;line-height:16px;font-size:11.2px;color:#ffffff;left:1197.31px;width:119.86px;overflow:hidden;transform:scaleX(0.865);transform-origin:0 50%;-webkit-text-stroke:.45px #fff;">Buy open: 0, profit: 0.0, positions: 0</div>
<div style="top:173.71px;height:16px;line-height:16px;font-size:11.2px;color:#ffffff;left:1197.31px;width:119.86px;overflow:hidden;transform:scaleX(0.865);transform-origin:0 50%;-webkit-text-stroke:.45px #fff;">Sell open: 0, profit: 0.0, positions: 0</div>
<div style="top:184.64px;height:16px;line-height:16px;font-size:11.2px;color:#ffffff;left:1197.31px;width:119.86px;overflow:hidden;transform:scaleX(0.865);transform-origin:0 50%;-webkit-text-stroke:.45px #fff;">Active indicators: Support and Resistance</div>
<div style="top:195.57px;height:16px;line-height:16px;font-size:11.2px;color:#ffffff;left:1197.31px;width:119.86px;overflow:hidden;transform:scaleX(0.865);transform-origin:0 50%;-webkit-text-stroke:.45px #fff;">Trading hours: 0-24</div>
<div style="top:206.50px;height:16px;line-height:16px;font-size:11.2px;color:#ffffff;left:1197.31px;width:119.86px;overflow:hidden;transform:scaleX(0.865);transform-origin:0 50%;-webkit-text-stroke:.45px #fff;">Can buy: true, Can sell:false</div>
<div style="left:1208.58px;top:172.54px;width:2.56px;height:61.7px;background:#00d800;"></div>
<div style="left:1203.2px;top:178.05px;width:6.66px;height:2.3px;background:#00d800;"></div>
<div style="left:1209.86px;top:208.77px;width:7.68px;height:2.3px;background:#00d800;"></div>
<div style="left:1223.42px;top:192px;width:2.56px;height:22.53px;background:#00d800;"></div>
<div style="left:1218.05px;top:208.77px;width:6.66px;height:2.3px;background:#00d800;"></div>
<div style="left:1224.7px;top:193.41px;width:7.68px;height:2.3px;background:#00d800;"></div>
<div style="left:1240.32px;top:172.54px;width:2.56px;height:51.71px;background:#00d800;"></div>
<div style="left:1234.94px;top:193.41px;width:6.66px;height:2.3px;background:#00d800;"></div>
<div style="left:1241.6px;top:173.95px;width:7.68px;height:2.3px;background:#00d800;"></div>
<div style="left:1257.73px;top:157.7px;width:2.56px;height:24.06px;background:#00d800;"></div>
<div style="left:1252.35px;top:173.95px;width:6.66px;height:2.3px;background:#00d800;"></div>
<div style="left:1259.01px;top:160.13px;width:7.68px;height:2.3px;background:#00d800;"></div>
<div style="left:1272.58px;top:160.26px;width:2.56px;height:19.71px;background:#00d800;"></div>
<div style="left:1267.2px;top:160.13px;width:6.66px;height:2.3px;background:#00d800;"></div>
<div style="left:1273.86px;top:175.49px;width:7.68px;height:2.3px;background:#00d800;"></div>
<div style="left:1193.73px;top:173.44px;width:107.26px;height:1.28px;background:repeating-linear-gradient(90deg,#ff2a2a 0 3px,#7a1010 3px 5px);"></div>
<div style="left:1302.53px;top:169.22px;width:39.94px;height:9.73px;background:#f01818;"></div>
<div style="top:166.08px;height:16px;line-height:16px;font-size:11.2px;color:#fff;left:1305.09px;transform:scaleX(0.87);transform-origin:0 50%;">67.950</div>
<div style="left:1300.99px;top:133.63px;width:3.07px;height:1.02px;background:#ddd;"></div>
<div style="top:126.14px;height:16px;line-height:16px;font-size:11.2px;color:#f0f0f0;left:1305.09px;transform:scaleX(0.87);transform-origin:0 50%;-webkit-text-stroke:.3px #f0f0f0;">67.970</div>
<div style="left:1300.99px;top:206.59px;width:3.07px;height:1.02px;background:#ddd;"></div>
<div style="top:199.10px;height:16px;line-height:16px;font-size:11.2px;color:#f0f0f0;left:1305.09px;transform:scaleX(0.87);transform-origin:0 50%;-webkit-text-stroke:.3px #f0f0f0;">67.830</div>
<div style="left:1302.53px;top:178.43px;width:32.51px;height:9.73px;background:#8ea2ba;"></div>
<div style="top:175.30px;height:16px;line-height:16px;font-size:11.2px;color:#10161e;left:1305.09px;transform:scaleX(0.87);transform-origin:0 50%;">67.940</div>
<div style="left:1253.63px;top:250.88px;width:1.02px;height:3.07px;background:#ccc;"></div>
<div style="top:252.35px;height:16px;line-height:16px;font-size:11.2px;color:#f0f0f0;left:1192.19px;transform:scaleX(0.865);transform-origin:0 50%;-webkit-text-stroke:.3px #f0f0f0;">25 Nov 2019</div>
<div style="top:252.35px;height:16px;line-height:16px;font-size:11.2px;color:#f0f0f0;left:1256.19px;transform:scaleX(0.865);transform-origin:0 50%;-webkit-text-stroke:.3px #f0f0f0;">25 Nov 15:25</div>
<div style="left:1198.08px;top:143.36px;width:92.16px;height:3.07px;background:#0c8a0c;opacity:.8;"></div>
<div style="left:1358.85px;top:77.31px;width:194.56px;height:201.22px;background:#dbe6f4;border:1px solid #b4c3d6;border-radius:2px 2px 0 0;"></div>
<svg style="left:1367.04px;top:86.02px;width:14.85px;height:16.9px;" viewBox="0 0 16 17"><rect x="1" y="1" width="11" height="9" rx="2" fill="#5db0f0" stroke="#2f86d3" stroke-width="1.2"/><rect x="3" y="5" width="12" height="10" rx="2" fill="#eaf4fd" stroke="#2f86d3" stroke-width="1.4"/><rect x="5.5" y="9" width="7" height="3.500" fill="#f08a3c"/></svg>
<div style="top:87.23px;height:16px;line-height:16px;font-size:12px;color:#a9adb3;left:1385.98px;transform:scaleX(0.985);transform-origin:0 50%;">HEN,M5</div>
<div style="left:1445.38px;top:86.02px;width:30.72px;height:16.38px;background:linear-gradient(#e6eef8,#d6e2f1);border:1px solid #aebdd0;border-radius:2px;"></div>
<div style="left:1454.59px;top:93.7px;width:12.29px;height:5.12px;background:#f4f7fb;border:1.5px solid #7a828e;border-radius:2px;"></div>
<div style="left:1482.24px;top:86.02px;width:30.72px;height:16.38px;background:linear-gradient(#e6eef8,#d6e2f1);border:1px solid #aebdd0;border-radius:2px;"></div>
<div style="left:1492.22px;top:89.6px;width:10.75px;height:8.7px;background:#f4f7fb;border:1px solid #7a828e;border-top-width:2px;"></div>
<div style="left:1517.06px;top:86.02px;width:30.72px;height:16.38px;background:linear-gradient(#e6eef8,#d6e2f1);border:1px solid #aebdd0;border-radius:2px;"></div>
<svg style="left:1527.3px;top:89.6px;width:10.24px;height:9.22px;" viewBox="0 0 10 9"><path d="M1 1L9 8M9 1L1 8" stroke="#7a828e" stroke-width="2"/></svg>
<div style="left:1366.53px;top:107.01px;width:179.71px;height:160.51px;background:#000;overflow:hidden;"></div>
<div style="left:1369.86px;top:110.34px;width:128.26px;height:136.7px;border:1px solid #9a9a9a;"></div>
<div style="left:1396.99px;top:111.36px;width:1.02px;height:134.66px;background:repeating-linear-gradient(#5a6a7a 0 2px,transparent 2px 6px);"></div>
<div style="left:1429.25px;top:111.36px;width:1.02px;height:134.66px;background:repeating-linear-gradient(#5a6a7a 0 2px,transparent 2px 6px);"></div>
<div style="left:1461.5px;top:111.36px;width:1.02px;height:134.66px;background:repeating-linear-gradient(#5a6a7a 0 2px,transparent 2px 6px);"></div>
<div style="left:1373.44px;top:114.69px;width:12.8px;height:12.29px;background:linear-gradient(90deg,#f1edff 0 28%,#ffb0b8 28% 52%,#f6f2ff 52% 72%,#b8b4ff 72%);border:1px solid #c9c4ff;"></div>
<div style="left:1389.82px;top:114.69px;width:14.34px;height:12.29px;background:linear-gradient(90deg,#2238e0 0 48%,#f0eaff 48% 58%,#e83030 58%);border:1px solid #3040d0;"></div>
<div style="top:112.83px;height:16px;line-height:16px;font-size:11px;color:#fff;font-weight:bold;left:1407.23px;transform:scaleX(0.82);transform-origin:0 50%;max-width:89.6px;overflow:hidden;">EA Builder MT5</div>
<svg style="left:1480.7px;top:112.13px;width:15.87px;height:16.9px;" viewBox="0 0 16 16"><path d="M5 1h6l1 3H4Z" fill="#ddd"/><circle cx="8" cy="6" r="2.400" fill="#f0d0b0"/><path d="M2 15c0-4 2.500-6 6-6s6 2 6 6Z" fill="#7fb8e8"/><circle cx="11.500" cy="12" r="3.400" fill="#3fc23f"/><circle cx="5" cy="12.500" r="2.600" fill="#4aa0e8"/></svg>
<div style="top:126.91px;height:16px;line-height:16px;font-size:11.2px;color:#ffffff;left:1373.44px;width:144.13px;overflow:hidden;transform:scaleX(0.865);transform-origin:0 50%;-webkit-text-stroke:.45px #fff;">Orders: 0, Tick executed: 119</div>
<div style="top:137.84px;height:16px;line-height:16px;font-size:11.2px;color:#ffffff;left:1373.44px;width:144.13px;overflow:hidden;transform:scaleX(0.865);transform-origin:0 50%;-webkit-text-stroke:.45px #fff;">Balance: 10085.12Equity: 10085.01</div>
<div style="top:148.77px;height:16px;line-height:16px;font-size:11.2px;color:#ffffff;left:1373.44px;width:144.13px;overflow:hidden;transform:scaleX(0.865);transform-origin:0 50%;-webkit-text-stroke:.45px #fff;">Orders open: 0, profit: 0.0, positions: 0</div>
<div style="top:159.71px;height:16px;line-height:16px;font-size:11.2px;color:#ffffff;left:1373.44px;width:144.13px;overflow:hidden;transform:scaleX(0.865);transform-origin:0 50%;-webkit-text-stroke:.45px #fff;">Buy open: 0, profit: 0.0, positions: 0</div>
<div style="top:170.64px;height:16px;line-height:16px;font-size:11.2px;color:#ffffff;left:1373.44px;width:144.13px;overflow:hidden;transform:scaleX(0.865);transform-origin:0 50%;-webkit-text-stroke:.45px #fff;">Sell open: 0, profit: 0.0, positions: 0</div>
<div style="top:181.57px;height:16px;line-height:16px;font-size:11.2px;color:#ffffff;left:1373.44px;width:144.13px;overflow:hidden;transform:scaleX(0.865);transform-origin:0 50%;-webkit-text-stroke:.45px #fff;">Active indicators: Support and Resistance</div>
<div style="top:192.50px;height:16px;line-height:16px;font-size:11.2px;color:#ffffff;left:1373.44px;width:144.13px;overflow:hidden;transform:scaleX(0.865);transform-origin:0 50%;-webkit-text-stroke:.45px #fff;">Trading hours: 0-24</div>
<div style="top:203.43px;height:16px;line-height:16px;font-size:11.2px;color:#ffffff;left:1373.44px;width:144.13px;overflow:hidden;transform:scaleX(0.865);transform-origin:0 50%;-webkit-text-stroke:.45px #fff;">Can buy: true, Can sell:false</div>
<div style="left:1383.68px;top:120.32px;width:2.56px;height:57.09px;background:#00d800;"></div>
<div style="left:1378.3px;top:176.26px;width:6.66px;height:2.3px;background:#00d800;"></div>
<div style="left:1384.96px;top:140.93px;width:7.68px;height:2.3px;background:#00d800;"></div>
<div style="left:1399.04px;top:140.8px;width:2.56px;height:22.02px;background:#00d800;"></div>
<div style="left:1393.66px;top:140.93px;width:6.66px;height:2.3px;background:#00d800;"></div>
<div style="left:1400.32px;top:159.1px;width:7.68px;height:2.3px;background:#00d800;"></div>
<div style="left:1415.42px;top:157.7px;width:2.56px;height:19.71px;background:#00d800;"></div>
<div style="left:1410.05px;top:159.1px;width:6.66px;height:2.3px;background:#00d800;"></div>
<div style="left:1416.7px;top:174.46px;width:7.68px;height:2.3px;background:#00d800;"></div>
<div style="left:1431.3px;top:162.82px;width:2.56px;height:14.59px;background:#00d800;"></div>
<div style="left:1425.92px;top:174.46px;width:6.66px;height:2.3px;background:#00d800;"></div>
<div style="left:1432.58px;top:174.98px;width:7.68px;height:2.3px;background:#00d800;"></div>
<div style="left:1447.17px;top:175.1px;width:2.56px;height:34.3px;background:#00d800;"></div>
<div style="left:1441.79px;top:174.98px;width:6.66px;height:2.3px;background:#00d800;"></div>
<div style="left:1448.45px;top:190.85px;width:7.68px;height:2.3px;background:#00d800;"></div>
<div style="left:1463.04px;top:177.41px;width:2.56px;height:17.15px;background:#00d800;"></div>
<div style="left:1457.66px;top:190.85px;width:6.66px;height:2.3px;background:#00d800;"></div>
<div style="left:1464.32px;top:178.05px;width:7.68px;height:2.3px;background:#00d800;"></div>
<div style="left:1498.11px;top:124.93px;width:3.07px;height:1.02px;background:#ddd;"></div>
<div style="top:117.44px;height:16px;line-height:16px;font-size:11.2px;color:#f0f0f0;left:1502.21px;transform:scaleX(0.87);transform-origin:0 50%;-webkit-text-stroke:.3px #f0f0f0;">94.450</div>
<div style="left:1498.11px;top:160.77px;width:3.07px;height:1.02px;background:#ddd;"></div>
<div style="top:153.28px;height:16px;line-height:16px;font-size:11.2px;color:#f0f0f0;left:1502.21px;transform:scaleX(0.87);transform-origin:0 50%;-webkit-text-stroke:.3px #f0f0f0;">94.350</div>
<div style="left:1498.11px;top:194.05px;width:3.07px;height:1.02px;background:#ddd;"></div>
<div style="top:186.56px;height:16px;line-height:16px;font-size:11.2px;color:#f0f0f0;left:1502.21px;transform:scaleX(0.87);transform-origin:0 50%;-webkit-text-stroke:.3px #f0f0f0;">94.250</div>
<div style="left:1498.11px;top:229.89px;width:3.07px;height:1.02px;background:#ddd;"></div>
<div style="top:222.40px;height:16px;line-height:16px;font-size:11.2px;color:#f0f0f0;left:1502.21px;transform:scaleX(0.87);transform-origin:0 50%;-webkit-text-stroke:.3px #f0f0f0;">94.150</div>
<div style="left:1499.65px;top:172.54px;width:32.51px;height:9.73px;background:#8ea2ba;"></div>
<div style="top:169.41px;height:16px;line-height:16px;font-size:11.2px;color:#10161e;left:1502.21px;transform:scaleX(0.87);transform-origin:0 50%;">94.300</div>
<div style="left:1429.76px;top:247.04px;width:1.02px;height:3.07px;background:#ccc;"></div>
<div style="top:248.51px;height:16px;line-height:16px;font-size:11.2px;color:#f0f0f0;left:1368.32px;transform:scaleX(0.865);transform-origin:0 50%;-webkit-text-stroke:.3px #f0f0f0;">25 Nov 2019</div>
<div style="top:248.51px;height:16px;line-height:16px;font-size:11.2px;color:#f0f0f0;left:1432.32px;transform:scaleX(0.865);transform-origin:0 50%;-webkit-text-stroke:.3px #f0f0f0;">25 Nov 15:20</div>
<div style="left:1557.5px;top:77.31px;width:169.98px;height:201.22px;background:#dbe6f4;border:1px solid #b4c3d6;border-radius:2px 2px 0 0;"></div>
<svg style="left:1565.7px;top:86.02px;width:14.85px;height:16.9px;" viewBox="0 0 16 17"><rect x="1" y="1" width="11" height="9" rx="2" fill="#5db0f0" stroke="#2f86d3" stroke-width="1.2"/><rect x="3" y="5" width="12" height="10" rx="2" fill="#eaf4fd" stroke="#2f86d3" stroke-width="1.4"/><rect x="5.5" y="9" width="7" height="3.500" fill="#f08a3c"/></svg>
<div style="top:87.23px;height:16px;line-height:16px;font-size:12px;color:#a9adb3;left:1584.64px;transform:scaleX(0.985);transform-origin:0 50%;">MR...</div>
<div style="left:1623.04px;top:86.02px;width:30.72px;height:16.38px;background:linear-gradient(#e6eef8,#d6e2f1);border:1px solid #aebdd0;border-radius:2px;"></div>
<div style="left:1632.26px;top:93.7px;width:12.29px;height:5.12px;background:#f4f7fb;border:1.5px solid #7a828e;border-radius:2px;"></div>
<div style="left:1657.86px;top:86.02px;width:30.72px;height:16.38px;background:linear-gradient(#e6eef8,#d6e2f1);border:1px solid #aebdd0;border-radius:2px;"></div>
<div style="left:1667.84px;top:89.6px;width:10.75px;height:8.7px;background:#f4f7fb;border:1px solid #7a828e;border-top-width:2px;"></div>
<div style="left:1692.67px;top:86.02px;width:30.72px;height:16.38px;background:linear-gradient(#e6eef8,#d6e2f1);border:1px solid #aebdd0;border-radius:2px;"></div>
<svg style="left:1702.91px;top:89.6px;width:10.24px;height:9.22px;" viewBox="0 0 10 9"><path d="M1 1L9 8M9 1L1 8" stroke="#7a828e" stroke-width="2"/></svg>
<div style="left:1563.65px;top:107.01px;width:156.67px;height:160.51px;background:#000;overflow:hidden;"></div>
<div style="left:1566.98px;top:110.34px;width:101.63px;height:136.7px;border:1px solid #9a9a9a;"></div>
<div style="left:1594.11px;top:111.36px;width:1.02px;height:134.66px;background:repeating-linear-gradient(#5a6a7a 0 2px,transparent 2px 6px);"></div>
<div style="left:1626.37px;top:111.36px;width:1.02px;height:134.66px;background:repeating-linear-gradient(#5a6a7a 0 2px,transparent 2px 6px);"></div>
<div style="left:1658.62px;top:111.36px;width:1.02px;height:134.66px;background:repeating-linear-gradient(#5a6a7a 0 2px,transparent 2px 6px);"></div>
<div style="left:1570.56px;top:114.69px;width:12.8px;height:12.29px;background:linear-gradient(90deg,#f1edff 0 28%,#ffb0b8 28% 52%,#f6f2ff 52% 72%,#b8b4ff 72%);border:1px solid #c9c4ff;"></div>
<div style="left:1586.94px;top:114.69px;width:14.34px;height:12.29px;background:linear-gradient(90deg,#2238e0 0 48%,#f0eaff 48% 58%,#e83030 58%);border:1px solid #3040d0;"></div>
<div style="top:112.83px;height:16px;line-height:16px;font-size:11px;color:#fff;font-weight:bold;left:1604.35px;transform:scaleX(0.82);transform-origin:0 50%;max-width:57.13px;overflow:hidden;">EA Builder MT5</div>
<svg style="left:1651.2px;top:112.13px;width:15.87px;height:16.9px;" viewBox="0 0 16 16"><path d="M5 1h6l1 3H4Z" fill="#ddd"/><circle cx="8" cy="6" r="2.400" fill="#f0d0b0"/><path d="M2 15c0-4 2.500-6 6-6s6 2 6 6Z" fill="#7fb8e8"/><circle cx="11.500" cy="12" r="3.400" fill="#3fc23f"/><circle cx="5" cy="12.500" r="2.600" fill="#4aa0e8"/></svg>
<div style="top:126.91px;height:16px;line-height:16px;font-size:11.2px;color:#ffffff;left:1570.56px;width:113.35px;overflow:hidden;transform:scaleX(0.865);transform-origin:0 50%;-webkit-text-stroke:.45px #fff;">Orders: 0, Tick executed: 119</div>
<div style="top:137.84px;height:16px;line-height:16px;font-size:11.2px;color:#ffffff;left:1570.56px;width:113.35px;overflow:hidden;transform:scaleX(0.865);transform-origin:0 50%;-webkit-text-stroke:.45px #fff;">Balance: 10085.12Equity: 10085.01</div>
<div style="top:148.77px;height:16px;line-height:16px;font-size:11.2px;color:#ffffff;left:1570.56px;width:113.35px;overflow:hidden;transform:scaleX(0.865);transform-origin:0 50%;-webkit-text-stroke:.45px #fff;">Orders open: 0, profit: 0.0, positions: 0</div>
<div style="top:159.71px;height:16px;line-height:16px;font-size:11.2px;color:#ffffff;left:1570.56px;width:113.35px;overflow:hidden;transform:scaleX(0.865);transform-origin:0 50%;-webkit-text-stroke:.45px #fff;">Buy open: 0, profit: 0.0, positions: 0</div>
<div style="top:170.64px;height:16px;line-height:16px;font-size:11.2px;color:#ffffff;left:1570.56px;width:113.35px;overflow:hidden;transform:scaleX(0.865);transform-origin:0 50%;-webkit-text-stroke:.45px #fff;">Sell open: 0, profit: 0.0, positions: 0</div>
<div style="top:181.57px;height:16px;line-height:16px;font-size:11.2px;color:#ffffff;left:1570.56px;width:113.35px;overflow:hidden;transform:scaleX(0.865);transform-origin:0 50%;-webkit-text-stroke:.45px #fff;">Active indicators: Support and Resistance</div>
<div style="top:192.50px;height:16px;line-height:16px;font-size:11.2px;color:#ffffff;left:1570.56px;width:113.35px;overflow:hidden;transform:scaleX(0.865);transform-origin:0 50%;-webkit-text-stroke:.45px #fff;">Trading hours: 0-24</div>
<div style="top:203.43px;height:16px;line-height:16px;font-size:11.2px;color:#ffffff;left:1570.56px;width:113.35px;overflow:hidden;transform:scaleX(0.865);transform-origin:0 50%;-webkit-text-stroke:.45px #fff;">Can buy: true, Can sell:false</div>
<div style="left:1582.85px;top:143.1px;width:2.56px;height:29.44px;background:#00d800;"></div>
<div style="left:1577.47px;top:142.72px;width:6.66px;height:2.3px;background:#00d800;"></div>
<div style="left:1584.13px;top:160.13px;width:7.68px;height:2.3px;background:#00d800;"></div>
<div style="left:1598.72px;top:143.1px;width:2.56px;height:17.15px;background:#00d800;"></div>
<div style="left:1593.34px;top:160.13px;width:6.66px;height:2.3px;background:#00d800;"></div>
<div style="left:1600px;top:142.72px;width:7.68px;height:2.3px;background:#00d800;"></div>
<div style="left:1614.59px;top:142.85px;width:2.56px;height:2.56px;background:#00d800;"></div>
<div style="left:1609.22px;top:142.72px;width:6.66px;height:2.3px;background:#00d800;"></div>
<div style="left:1615.87px;top:142.72px;width:7.68px;height:2.3px;background:#00d800;"></div>
<div style="left:1630.46px;top:142.85px;width:2.56px;height:2.56px;background:#00d800;"></div>
<div style="left:1625.09px;top:142.72px;width:6.66px;height:2.3px;background:#00d800;"></div>
<div style="left:1631.74px;top:142.72px;width:7.68px;height:2.3px;background:#00d800;"></div>
<div style="left:1645.82px;top:143.1px;width:2.56px;height:19.71px;background:#00d800;"></div>
<div style="left:1640.45px;top:142.72px;width:6.66px;height:2.3px;background:#00d800;"></div>
<div style="left:1647.1px;top:160.13px;width:7.68px;height:2.3px;background:#00d800;"></div>
<div style="left:1668.61px;top:126.72px;width:3.07px;height:1.02px;background:#ddd;"></div>
<div style="top:119.23px;height:16px;line-height:16px;font-size:11.2px;color:#f0f0f0;left:1672.70px;transform:scaleX(0.87);transform-origin:0 50%;-webkit-text-stroke:.3px #f0f0f0;">106.650</div>
<div style="left:1668.61px;top:195.58px;width:3.07px;height:1.02px;background:#ddd;"></div>
<div style="top:188.10px;height:16px;line-height:16px;font-size:11.2px;color:#f0f0f0;left:1672.70px;transform:scaleX(0.87);transform-origin:0 50%;-webkit-text-stroke:.3px #f0f0f0;">106.450</div>
<div style="left:1670.14px;top:156.42px;width:37.25px;height:9.73px;background:#8ea2ba;"></div>
<div style="top:153.28px;height:16px;line-height:16px;font-size:11.2px;color:#10161e;left:1672.70px;transform:scaleX(0.87);transform-origin:0 50%;">106.550</div>
<div style="left:1626.88px;top:247.04px;width:1.02px;height:3.07px;background:#ccc;"></div>
<div style="top:248.51px;height:16px;line-height:16px;font-size:11.2px;color:#f0f0f0;left:1565.44px;transform:scaleX(0.865);transform-origin:0 50%;-webkit-text-stroke:.3px #f0f0f0;">25 Nov 2019</div>
<div style="top:248.51px;height:16px;line-height:16px;font-size:11.2px;color:#f0f0f0;left:1629.44px;transform:scaleX(0.865);transform-origin:0 50%;-webkit-text-stroke:.3px #f0f0f0;">25 Nov 15:25</div>
<div style="left:1733.12px;top:77.31px;width:164.35px;height:201.22px;background:#dbe6f4;border:1px solid #b4c3d6;border-radius:2px 2px 0 0;"></div>
<svg style="left:1741.31px;top:86.02px;width:14.85px;height:16.9px;" viewBox="0 0 16 17"><rect x="1" y="1" width="11" height="9" rx="2" fill="#5db0f0" stroke="#2f86d3" stroke-width="1.2"/><rect x="3" y="5" width="12" height="10" rx="2" fill="#eaf4fd" stroke="#2f86d3" stroke-width="1.4"/><rect x="5.5" y="9" width="7" height="3.500" fill="#f08a3c"/></svg>
<div style="top:87.23px;height:16px;line-height:16px;font-size:12px;color:#a9adb3;left:1760.26px;transform:scaleX(0.985);transform-origin:0 50%;">VO...</div>
<div style="left:1788.93px;top:86.02px;width:30.72px;height:16.38px;background:linear-gradient(#e6eef8,#d6e2f1);border:1px solid #aebdd0;border-radius:2px;"></div>
<div style="left:1798.14px;top:93.7px;width:12.29px;height:5.12px;background:#f4f7fb;border:1.5px solid #7a828e;border-radius:2px;"></div>
<div style="left:1824.26px;top:86.02px;width:30.72px;height:16.38px;background:linear-gradient(#e6eef8,#d6e2f1);border:1px solid #aebdd0;border-radius:2px;"></div>
<div style="left:1834.24px;top:89.6px;width:10.75px;height:8.7px;background:#f4f7fb;border:1px solid #7a828e;border-top-width:2px;"></div>
<div style="left:1859.07px;top:86.02px;width:30.72px;height:16.38px;background:linear-gradient(#e6eef8,#d6e2f1);border:1px solid #aebdd0;border-radius:2px;"></div>
<svg style="left:1869.31px;top:89.6px;width:10.24px;height:9.22px;" viewBox="0 0 10 9"><path d="M1 1L9 8M9 1L1 8" stroke="#7a828e" stroke-width="2"/></svg>
<div style="left:1739.78px;top:107.01px;width:150.02px;height:160.51px;background:#000;overflow:hidden;"></div>
<div style="left:1743.1px;top:110.34px;width:93.95px;height:136.7px;border:1px solid #9a9a9a;"></div>
<div style="left:1770.24px;top:111.36px;width:1.02px;height:134.66px;background:repeating-linear-gradient(#5a6a7a 0 2px,transparent 2px 6px);"></div>
<div style="left:1802.5px;top:111.36px;width:1.02px;height:134.66px;background:repeating-linear-gradient(#5a6a7a 0 2px,transparent 2px 6px);"></div>
<div style="left:1746.69px;top:114.69px;width:12.8px;height:12.29px;background:linear-gradient(90deg,#f1edff 0 28%,#ffb0b8 28% 52%,#f6f2ff 52% 72%,#b8b4ff 72%);border:1px solid #c9c4ff;"></div>
<div style="left:1763.07px;top:114.69px;width:14.34px;height:12.29px;background:linear-gradient(90deg,#2238e0 0 48%,#f0eaff 48% 58%,#e83030 58%);border:1px solid #3040d0;"></div>
<div style="top:112.83px;height:16px;line-height:16px;font-size:11px;color:#fff;font-weight:bold;left:1780.48px;transform:scaleX(0.82);transform-origin:0 50%;max-width:47.77px;overflow:hidden;">EA Builder MT5</div>
<svg style="left:1819.65px;top:112.13px;width:15.87px;height:16.9px;" viewBox="0 0 16 16"><path d="M5 1h6l1 3H4Z" fill="#ddd"/><circle cx="8" cy="6" r="2.400" fill="#f0d0b0"/><path d="M2 15c0-4 2.500-6 6-6s6 2 6 6Z" fill="#7fb8e8"/><circle cx="11.500" cy="12" r="3.400" fill="#3fc23f"/><circle cx="5" cy="12.500" r="2.600" fill="#4aa0e8"/></svg>
<div style="top:126.91px;height:16px;line-height:16px;font-size:11.2px;color:#ffffff;left:1746.69px;width:104.47px;overflow:hidden;transform:scaleX(0.865);transform-origin:0 50%;-webkit-text-stroke:.45px #fff;">Orders: 0, Tick executed: 119</div>
<div style="top:137.84px;height:16px;line-height:16px;font-size:11.2px;color:#ffffff;left:1746.69px;width:104.47px;overflow:hidden;transform:scaleX(0.865);transform-origin:0 50%;-webkit-text-stroke:.45px #fff;">Balance: 10085.12Equity: 10085.01</div>
<div style="top:148.77px;height:16px;line-height:16px;font-size:11.2px;color:#ffffff;left:1746.69px;width:104.47px;overflow:hidden;transform:scaleX(0.865);transform-origin:0 50%;-webkit-text-stroke:.45px #fff;">Orders open: 0, profit: 0.0, positions: 0</div>
<div style="top:159.71px;height:16px;line-height:16px;font-size:11.2px;color:#ffffff;left:1746.69px;width:104.47px;overflow:hidden;transform:scaleX(0.865);transform-origin:0 50%;-webkit-text-stroke:.45px #fff;">Buy open: 0, profit: 0.0, positions: 0</div>
<div style="top:170.64px;height:16px;line-height:16px;font-size:11.2px;color:#ffffff;left:1746.69px;width:104.47px;overflow:hidden;transform:scaleX(0.865);transform-origin:0 50%;-webkit-text-stroke:.45px #fff;">Sell open: 0, profit: 0.0, positions: 0</div>
<div style="top:181.57px;height:16px;line-height:16px;font-size:11.2px;color:#ffffff;left:1746.69px;width:104.47px;overflow:hidden;transform:scaleX(0.865);transform-origin:0 50%;-webkit-text-stroke:.45px #fff;">Active indicators: Support and Resistance</div>
<div style="top:192.50px;height:16px;line-height:16px;font-size:11.2px;color:#ffffff;left:1746.69px;width:104.47px;overflow:hidden;transform:scaleX(0.865);transform-origin:0 50%;-webkit-text-stroke:.45px #fff;">Trading hours: 0-24</div>
<div style="top:203.43px;height:16px;line-height:16px;font-size:11.2px;color:#ffffff;left:1746.69px;width:104.47px;overflow:hidden;transform:scaleX(0.865);transform-origin:0 50%;-webkit-text-stroke:.45px #fff;">Can buy: true, Can sell:false</div>
<div style="left:1757.44px;top:162.56px;width:2.56px;height:32px;background:#00d800;"></div>
<div style="left:1752.06px;top:176.26px;width:6.66px;height:2.3px;background:#00d800;"></div>
<div style="left:1758.72px;top:162.18px;width:7.68px;height:2.3px;background:#00d800;"></div>
<div style="left:1773.82px;top:122.88px;width:2.56px;height:54.53px;background:#00d800;"></div>
<div style="left:1768.45px;top:162.18px;width:6.66px;height:2.3px;background:#00d800;"></div>
<div style="left:1775.1px;top:160.13px;width:7.68px;height:2.3px;background:#00d800;"></div>
<div style="left:1790.21px;top:150.27px;width:2.56px;height:12.29px;background:#00d800;"></div>
<div style="left:1784.83px;top:160.13px;width:6.66px;height:2.3px;background:#00d800;"></div>
<div style="left:1791.49px;top:160.13px;width:7.68px;height:2.3px;background:#00d800;"></div>
<div style="left:1806.08px;top:122.88px;width:2.56px;height:56.83px;background:#00d800;"></div>
<div style="left:1800.7px;top:160.13px;width:6.66px;height:2.3px;background:#00d800;"></div>
<div style="left:1807.36px;top:160.13px;width:7.68px;height:2.3px;background:#00d800;"></div>
<div style="left:1837.06px;top:135.17px;width:3.07px;height:1.02px;background:#ddd;"></div>
<div style="top:127.68px;height:16px;line-height:16px;font-size:11.2px;color:#f0f0f0;left:1841.15px;transform:scaleX(0.87);transform-origin:0 50%;-webkit-text-stroke:.3px #f0f0f0;">47.0650</div>
<div style="left:1837.06px;top:169.98px;width:3.07px;height:1.02px;background:#ddd;"></div>
<div style="top:162.50px;height:16px;line-height:16px;font-size:11.2px;color:#f0f0f0;left:1841.15px;transform:scaleX(0.87);transform-origin:0 50%;-webkit-text-stroke:.3px #f0f0f0;">47.0450</div>
<div style="left:1837.06px;top:203.78px;width:3.07px;height:1.02px;background:#ddd;"></div>
<div style="top:196.29px;height:16px;line-height:16px;font-size:11.2px;color:#f0f0f0;left:1841.15px;transform:scaleX(0.87);transform-origin:0 50%;-webkit-text-stroke:.3px #f0f0f0;">47.0250</div>
<div style="left:1838.59px;top:156.93px;width:37.25px;height:9.73px;background:#8ea2ba;"></div>
<div style="top:153.79px;height:16px;line-height:16px;font-size:11.2px;color:#10161e;left:1841.15px;transform:scaleX(0.87);transform-origin:0 50%;">47.0500</div>
<div style="left:1803.01px;top:247.04px;width:1.02px;height:3.07px;background:#ccc;"></div>
<div style="top:248.51px;height:16px;line-height:16px;font-size:11.2px;color:#f0f0f0;left:1741.57px;transform:scaleX(0.865);transform-origin:0 50%;-webkit-text-stroke:.3px #f0f0f0;">25 Nov 2019</div>
<div style="top:248.51px;height:16px;line-height:16px;font-size:11.2px;color:#f0f0f0;left:1805.57px;transform:scaleX(0.865);transform-origin:0 50%;-webkit-text-stroke:.3px #f0f0f0;">25 Nov 15:30</div>
<div style="left:296.96px;top:280.06px;width:176.64px;height:155.65px;background:#b3cdeb;border:1px solid #7fa2cc;border-radius:2px 2px 0 0;"></div>
<svg style="left:305.15px;top:288.77px;width:14.85px;height:16.9px;" viewBox="0 0 16 17"><rect x="1" y="1" width="11" height="9" rx="2" fill="#5db0f0" stroke="#2f86d3" stroke-width="1.2"/><rect x="3" y="5" width="12" height="10" rx="2" fill="#eaf4fd" stroke="#2f86d3" stroke-width="1.4"/><rect x="5.5" y="9" width="7" height="3.500" fill="#f08a3c"/></svg>
<div style="top:289.98px;height:16px;line-height:16px;font-size:12px;color:#222;left:324.10px;transform:scaleX(0.985);transform-origin:0 50%;">BOS,...</div>
<div style="left:366.08px;top:288.77px;width:30.72px;height:16.38px;background:linear-gradient(#d3e1f1,#a9c2de);border:1px solid #93a7c0;border-radius:2px;"></div>
<div style="left:375.3px;top:296.45px;width:12.29px;height:5.12px;background:#f4f7fb;border:1.5px solid #4a5565;border-radius:2px;"></div>
<div style="left:401.92px;top:288.77px;width:30.72px;height:16.38px;background:linear-gradient(#d3e1f1,#a9c2de);border:1px solid #93a7c0;border-radius:2px;"></div>
<div style="left:411.9px;top:292.35px;width:10.75px;height:8.7px;background:#f4f7fb;border:1px solid #4a5565;border-top-width:2px;"></div>
<div style="left:435.71px;top:288.77px;width:30.72px;height:16.38px;background:linear-gradient(#e8836f,#c8432e);border:1px solid #8c3a30;border-radius:2px;"></div>
<svg style="left:445.44px;top:291.84px;width:11.26px;height:10.24px;" viewBox="0 0 10 9"><path d="M1 1L9 8M9 1L1 8" stroke="#fff" stroke-width="2"/></svg>
<div style="left:305.15px;top:311.3px;width:161.28px;height:122.37px;background:#000;overflow:hidden;"></div>
<div style="left:308.48px;top:314.62px;width:105.22px;height:119.04px;border:1px solid #9a9a9a;border-bottom:none;"></div>
<div style="left:335.62px;top:315.65px;width:1.02px;height:116.99px;background:repeating-linear-gradient(#5a6a7a 0 2px,transparent 2px 6px);"></div>
<div style="left:367.87px;top:315.65px;width:1.02px;height:116.99px;background:repeating-linear-gradient(#5a6a7a 0 2px,transparent 2px 6px);"></div>
<div style="left:400.13px;top:315.65px;width:1.02px;height:116.99px;background:repeating-linear-gradient(#5a6a7a 0 2px,transparent 2px 6px);"></div>
<div style="left:312.06px;top:318.98px;width:12.8px;height:12.29px;background:linear-gradient(90deg,#f1edff 0 28%,#ffb0b8 28% 52%,#f6f2ff 52% 72%,#b8b4ff 72%);border:1px solid #c9c4ff;"></div>
<div style="left:328.45px;top:318.98px;width:14.34px;height:12.29px;background:linear-gradient(90deg,#2238e0 0 48%,#f0eaff 48% 58%,#e83030 58%);border:1px solid #3040d0;"></div>
<div style="top:317.12px;height:16px;line-height:16px;font-size:11px;color:#fff;font-weight:bold;left:345.86px;transform:scaleX(0.82);transform-origin:0 50%;max-width:61.5px;overflow:hidden;">EA Builder MT5</div>
<svg style="left:396.29px;top:316.42px;width:15.87px;height:16.9px;" viewBox="0 0 16 16"><path d="M5 1h6l1 3H4Z" fill="#ddd"/><circle cx="8" cy="6" r="2.400" fill="#f0d0b0"/><path d="M2 15c0-4 2.500-6 6-6s6 2 6 6Z" fill="#7fb8e8"/><circle cx="11.500" cy="12" r="3.400" fill="#3fc23f"/><circle cx="5" cy="12.500" r="2.600" fill="#4aa0e8"/></svg>
<div style="top:331.20px;height:16px;line-height:16px;font-size:11.2px;color:#ffffff;left:312.06px;width:117.49px;overflow:hidden;transform:scaleX(0.865);transform-origin:0 50%;-webkit-text-stroke:.45px #fff;">Orders: 1, Tick executed: 119</div>
<div style="top:342.13px;height:16px;line-height:16px;font-size:11.2px;color:#ffffff;left:312.06px;width:117.49px;overflow:hidden;transform:scaleX(0.865);transform-origin:0 50%;-webkit-text-stroke:.45px #fff;">Balance: 10085.12Equity: 10085.01</div>
<div style="top:353.06px;height:16px;line-height:16px;font-size:11.2px;color:#ffffff;left:312.06px;width:117.49px;overflow:hidden;transform:scaleX(0.865);transform-origin:0 50%;-webkit-text-stroke:.45px #fff;">Orders open: 0, profit: 0.0, positions: 0</div>
<div style="top:363.99px;height:16px;line-height:16px;font-size:11.2px;color:#ffffff;left:312.06px;width:117.49px;overflow:hidden;transform:scaleX(0.865);transform-origin:0 50%;-webkit-text-stroke:.45px #fff;">Buy open: 0, profit: 0.0, positions: 0</div>
<div style="top:374.92px;height:16px;line-height:16px;font-size:11.2px;color:#ffffff;left:312.06px;width:117.49px;overflow:hidden;transform:scaleX(0.865);transform-origin:0 50%;-webkit-text-stroke:.45px #fff;">Sell open: 0, profit: 0.0, positions: 0</div>
<div style="top:385.86px;height:16px;line-height:16px;font-size:11.2px;color:#ffffff;left:312.06px;width:117.49px;overflow:hidden;transform:scaleX(0.865);transform-origin:0 50%;-webkit-text-stroke:.45px #fff;">Active indicators: Support and Resistance</div>
<div style="top:396.79px;height:16px;line-height:16px;font-size:11.2px;color:#ffffff;left:312.06px;width:117.49px;overflow:hidden;transform:scaleX(0.865);transform-origin:0 50%;-webkit-text-stroke:.45px #fff;">Trading hours: 0-24</div>
<div style="top:407.72px;height:16px;line-height:16px;font-size:11.2px;color:#ffffff;left:312.06px;width:117.49px;overflow:hidden;transform:scaleX(0.865);transform-origin:0 50%;-webkit-text-stroke:.45px #fff;">Can buy: true, Can sell:false</div>
<div style="left:322.3px;top:418.3px;width:2.56px;height:14.34px;background:#00d800;"></div>
<div style="left:316.93px;top:421.25px;width:6.66px;height:2.3px;background:#00d800;"></div>
<div style="left:337.66px;top:344.58px;width:2.56px;height:80.38px;background:#00d800;"></div>
<div style="left:332.29px;top:421.25px;width:6.66px;height:2.3px;background:#00d800;"></div>
<div style="left:338.94px;top:347.01px;width:7.68px;height:2.3px;background:#00d800;"></div>
<div style="left:353.54px;top:326.14px;width:2.56px;height:78.34px;background:#00d800;"></div>
<div style="left:348.16px;top:347.01px;width:6.66px;height:2.3px;background:#00d800;"></div>
<div style="left:354.82px;top:362.37px;width:7.68px;height:2.3px;background:#00d800;"></div>
<div style="left:369.41px;top:365.31px;width:2.56px;height:64.77px;background:#00d800;"></div>
<div style="left:364.03px;top:362.37px;width:6.66px;height:2.3px;background:#00d800;"></div>
<div style="left:370.69px;top:377.73px;width:7.68px;height:2.3px;background:#00d800;"></div>
<div style="left:384.77px;top:374.53px;width:2.56px;height:6.91px;background:#00d800;"></div>
<div style="left:379.39px;top:377.73px;width:6.66px;height:2.3px;background:#00d800;"></div>
<div style="left:386.05px;top:376.19px;width:7.68px;height:2.3px;background:#00d800;"></div>
<div style="left:308.48px;top:363.39px;width:105.22px;height:1.28px;background:repeating-linear-gradient(90deg,#ff2a2a 0 3px,#7a1010 3px 5px);"></div>
<div style="left:415.23px;top:359.17px;width:39.94px;height:9.73px;background:#f01818;"></div>
<div style="top:356.03px;height:16px;line-height:16px;font-size:11.2px;color:#fff;left:417.79px;transform:scaleX(0.87);transform-origin:0 50%;">42.6400</div>
<div style="left:413.7px;top:328.96px;width:3.07px;height:1.02px;background:#ddd;"></div>
<div style="top:321.47px;height:16px;line-height:16px;font-size:11.2px;color:#f0f0f0;left:417.79px;transform:scaleX(0.87);transform-origin:0 50%;-webkit-text-stroke:.3px #f0f0f0;">42.6900</div>
<div style="left:413.7px;top:400.38px;width:3.07px;height:1.02px;background:#ddd;"></div>
<div style="top:392.90px;height:16px;line-height:16px;font-size:11.2px;color:#f0f0f0;left:417.79px;transform:scaleX(0.87);transform-origin:0 50%;-webkit-text-stroke:.3px #f0f0f0;">42.5500</div>
<div style="left:415.23px;top:374.02px;width:37.25px;height:9.73px;background:#8ea2ba;"></div>
<div style="top:370.88px;height:16px;line-height:16px;font-size:11.2px;color:#10161e;left:417.79px;transform:scaleX(0.87);transform-origin:0 50%;">42.5900</div>
<svg style="left:351.23px;top:356.35px;width:8.7px;height:8.7px;" viewBox="0 0 10 10"><circle cx="5" cy="5" r="3.600" fill="#3d86f0" stroke="#dfe8ff" stroke-width="1.600"/></svg>
<div style="left:295.94px;top:435.71px;width:1624.06px;height:19.97px;background:#f0f0f0;border-top:1px solid #8a8a8a;"></div>
<div style="top:437.95px;height:16px;line-height:16px;font-size:12px;color:#8a8a8a;left:-121.30px;width:900px;text-align:center;transform:scaleX(0.985);transform-origin:50% 50%;">BAS,M5</div>
<div style="top:437.95px;height:16px;line-height:16px;font-size:12px;color:#8a8a8a;left:-56.78px;width:900px;text-align:center;transform:scaleX(0.985);transform-origin:50% 50%;">BEI,M5</div>
<div style="top:437.95px;height:16px;line-height:16px;font-size:12px;color:#8a8a8a;left:9.78px;width:900px;text-align:center;transform:scaleX(0.985);transform-origin:50% 50%;">BMW,M5</div>
<div style="top:437.95px;height:16px;line-height:16px;font-size:12px;color:#8a8a8a;left:76.85px;width:900px;text-align:center;transform:scaleX(0.985);transform-origin:50% 50%;">DAI,M5</div>
<div style="top:437.95px;height:16px;line-height:16px;font-size:12px;color:#8a8a8a;left:139.82px;width:900px;text-align:center;transform:scaleX(0.985);transform-origin:50% 50%;">FME,M5</div>
<div style="top:437.95px;height:16px;line-height:16px;font-size:12px;color:#8a8a8a;left:202.80px;width:900px;text-align:center;transform:scaleX(0.985);transform-origin:50% 50%;">HEI,M5</div>
<div style="top:437.95px;height:16px;line-height:16px;font-size:12px;color:#8a8a8a;left:267.82px;width:900px;text-align:center;transform:scaleX(0.985);transform-origin:50% 50%;">HEN,M5</div>
<div style="top:437.95px;height:16px;line-height:16px;font-size:12px;color:#8a8a8a;left:344.62px;width:900px;text-align:center;transform:scaleX(0.985);transform-origin:50% 50%;">MRK.DE,M5</div>
<div style="top:437.95px;height:16px;line-height:16px;font-size:12px;color:#8a8a8a;left:421.42px;width:900px;text-align:center;transform:scaleX(0.985);transform-origin:50% 50%;">VON,M5</div>
<div style="left:360.96px;top:439.3px;width:1.02px;height:13.82px;background:#9a9a9a;"></div>
<div style="left:423.94px;top:439.3px;width:1.02px;height:13.82px;background:#9a9a9a;"></div>
<div style="left:495.1px;top:439.3px;width:1.02px;height:13.82px;background:#9a9a9a;"></div>
<div style="left:557.57px;top:439.3px;width:1.02px;height:13.82px;background:#9a9a9a;"></div>
<div style="left:621.57px;top:439.3px;width:1.02px;height:13.82px;background:#9a9a9a;"></div>
<div style="left:683.52px;top:439.3px;width:1.02px;height:13.82px;background:#9a9a9a;"></div>
<div style="left:751.62px;top:439.3px;width:1.02px;height:13.82px;background:#9a9a9a;"></div>
<div style="left:838.14px;top:439.3px;width:1.02px;height:13.82px;background:#9a9a9a;"></div>
<div style="left:908.29px;top:435.71px;width:65.54px;height:18.43px;background:#fff;border:2px solid #444;border-top:none;border-radius:0 0 4px 4px;"></div>
<div style="top:436.93px;height:16px;line-height:16px;font-size:12px;color:#111;left:491.06px;width:900px;text-align:center;transform:scaleX(0.985);transform-origin:50% 50%;">BOS,M5</div>
<svg style="left:1880.58px;top:442.37px;width:5.12px;height:7.17px;" viewBox="0 0 5 8"><path d="M4 1L1 4L4 7" stroke="#666" stroke-width="1.4" fill="none"/></svg>
<svg style="left:1903.1px;top:442.37px;width:5.12px;height:7.17px;" viewBox="0 0 5 8"><path d="M1 1L4 4L1 7" stroke="#666" stroke-width="1.4" fill="none"/></svg>
<div style="left:0px;top:455.68px;width:1920px;height:240.64px;background:#fff;border-top:1px solid #a0a0a0;"></div>
<div style="left:0px;top:456.19px;width:15.36px;height:239.62px;background:#f0f0f0;"></div>
<div style="left:0px;top:473.6px;width:15.36px;height:221.7px;background:linear-gradient(90deg,#e2ebf8,#c6d8f0);"></div>
<div style="left:2.05px;top:627.2px;width:13.31px;height:67.58px;background:linear-gradient(90deg,#b9d0ee,#9dbce5);"></div>
<svg style="left:4.86px;top:461.57px;width:5.63px;height:5.63px;" viewBox="0 0 8 8"><path d="M1 1L7 7M7 1L1 7" stroke="#000" stroke-width="2.2"/></svg>
<div style="top:-8.00px;height:16px;line-height:16px;font-size:10.5px;color:#1a1a1a;left:0.00px;left:1.02px;top:690.18px;transform:rotate(-90deg);transform-origin:0 0;height:14px;line-height:14px;">Werkzeuge</div>
<div style="left:16.9px;top:459.78px;width:1903.1px;height:22.53px;background:#fff;border-bottom:1px solid #e2e2e2;"></div>
<div style="left:224.26px;top:460.8px;width:1.02px;height:62.46px;background:#dadada;"></div>
<div style="left:369.15px;top:460.8px;width:1.02px;height:62.46px;background:#dadada;"></div>
<div style="left:507.39px;top:460.8px;width:1.02px;height:62.46px;background:#dadada;"></div>
<div style="left:668.16px;top:460.8px;width:1.02px;height:62.46px;background:#dadada;"></div>
<div style="left:830.46px;top:460.8px;width:1.02px;height:62.46px;background:#dadada;"></div>
<div style="left:991.23px;top:460.8px;width:1.02px;height:62.46px;background:#dadada;"></div>
<div style="left:1152.51px;top:460.8px;width:1.02px;height:62.46px;background:#dadada;"></div>
<div style="left:1313.79px;top:460.8px;width:1.02px;height:62.46px;background:#dadada;"></div>
<div style="left:1475.07px;top:460.8px;width:1.02px;height:62.46px;background:#dadada;"></div>
<div style="left:1635.84px;top:460.8px;width:1.02px;height:62.46px;background:#dadada;"></div>
<div style="top:463.55px;height:16px;line-height:16px;font-size:12px;color:#222;left:23.04px;transform:scaleX(0.985);transform-origin:0 50%;">Symbol</div>
<div style="top:463.55px;height:16px;line-height:16px;font-size:12px;color:#222;left:231.94px;transform:scaleX(0.985);transform-origin:0 50%;">Ticket</div>
<div style="top:463.55px;height:16px;line-height:16px;font-size:12px;color:#222;left:-419.74px;width:900px;text-align:right;transform:scaleX(0.985);transform-origin:100% 50%;">Zeit</div>
<svg style="left:494.08px;top:470.02px;width:6.66px;height:4.1px;" viewBox="0 0 8 5"><path d="M0 0H8L4 5Z" fill="#222"/></svg>
<div style="top:463.55px;height:16px;line-height:16px;font-size:12px;color:#222;left:647.68px;transform:scaleX(0.985);transform-origin:0 50%;">Typ</div>
<div style="top:463.55px;height:16px;line-height:16px;font-size:12px;color:#222;left:-74.14px;width:900px;text-align:right;transform:scaleX(0.985);transform-origin:100% 50%;">Volumen</div>
<div style="top:463.55px;height:16px;line-height:16px;font-size:12px;color:#222;left:86.62px;width:900px;text-align:right;transform:scaleX(0.985);transform-origin:100% 50%;">Preis</div>
<div style="top:463.55px;height:16px;line-height:16px;font-size:12px;color:#222;left:247.39px;width:900px;text-align:right;transform:scaleX(0.985);transform-origin:100% 50%;">S / L</div>
<div style="top:463.55px;height:16px;line-height:16px;font-size:12px;color:#222;left:409.70px;width:900px;text-align:right;transform:scaleX(0.985);transform-origin:100% 50%;">T / P</div>
<div style="top:463.55px;height:16px;line-height:16px;font-size:12px;color:#222;left:569.95px;width:900px;text-align:right;transform:scaleX(0.985);transform-origin:100% 50%;">Preis</div>
<div style="top:463.55px;height:16px;line-height:16px;font-size:12px;color:#222;left:730.72px;width:900px;text-align:right;transform:scaleX(0.985);transform-origin:100% 50%;">Swap</div>
<div style="top:463.55px;height:16px;line-height:16px;font-size:12px;color:#222;left:1011.30px;width:900px;text-align:right;transform:scaleX(0.985);transform-origin:100% 50%;">Gewinn</div>
<div style="left:16.9px;top:483.07px;width:1903.1px;height:19.97px;background:#0078d7;"></div>
<div style="left:224.26px;top:483.07px;width:1.02px;height:19.97px;background:#3d95e0;"></div>
<div style="left:369.15px;top:483.07px;width:1.02px;height:19.97px;background:#3d95e0;"></div>
<div style="left:507.39px;top:483.07px;width:1.02px;height:19.97px;background:#3d95e0;"></div>
<div style="left:668.16px;top:483.07px;width:1.02px;height:19.97px;background:#3d95e0;"></div>
<div style="left:830.46px;top:483.07px;width:1.02px;height:19.97px;background:#3d95e0;"></div>
<div style="left:991.23px;top:483.07px;width:1.02px;height:19.97px;background:#3d95e0;"></div>
<div style="left:1152.51px;top:483.07px;width:1.02px;height:19.97px;background:#3d95e0;"></div>
<div style="left:1313.79px;top:483.07px;width:1.02px;height:19.97px;background:#3d95e0;"></div>
<div style="left:1475.07px;top:483.07px;width:1.02px;height:19.97px;background:#3d95e0;"></div>
<div style="left:1635.84px;top:483.07px;width:1.02px;height:19.97px;background:#3d95e0;"></div>
<svg style="left:18.43px;top:484.86px;width:12.8px;height:16.38px;" viewBox="0 0 12 16"><path d="M2 1.500H9.500Q11 1.500 11 3V9.500Q11 11 9.500 11H7.500L6 14.500H2Z" fill="#f4f9ff" stroke="#e3effc" stroke-width="1"/><path d="M4.300 12V4.200H8.200V8H4.300" fill="none" stroke="#2f7fd8" stroke-width="1.700"/></svg>
<div style="top:485.31px;height:16px;line-height:16px;font-size:12px;color:#fff;left:38.40px;transform:scaleX(0.985);transform-origin:0 50%;">bos</div>
<div style="top:485.31px;height:16px;line-height:16px;font-size:12px;color:#fff;left:229.38px;transform:scaleX(0.91);transform-origin:0 50%;">2309058</div>
<div style="top:485.31px;height:16px;line-height:16px;font-size:12px;color:#fff;left:-394.14px;width:900px;text-align:right;transform:scaleX(0.91);transform-origin:100% 50%;">2019.11.25 15:23:37</div>
<div style="top:485.31px;height:16px;line-height:16px;font-size:12px;color:#fff;left:647.68px;transform:scaleX(0.985);transform-origin:0 50%;">buy</div>
<div style="top:485.31px;height:16px;line-height:16px;font-size:12px;color:#fff;left:-72.10px;width:900px;text-align:right;transform:scaleX(0.91);transform-origin:100% 50%;">1.00</div>
<div style="top:485.31px;height:16px;line-height:16px;font-size:12px;color:#fff;left:88.16px;width:900px;text-align:right;transform:scaleX(0.91);transform-origin:100% 50%;">42.6400</div>
<div style="top:485.31px;height:16px;line-height:16px;font-size:12px;color:#fff;left:249.44px;width:900px;text-align:right;transform:scaleX(0.91);transform-origin:100% 50%;">0.0000</div>
<div style="top:485.31px;height:16px;line-height:16px;font-size:12px;color:#fff;left:391.78px;width:900px;text-align:right;transform:scaleX(0.91);transform-origin:100% 50%;">0.0000</div>
<div style="top:485.31px;height:16px;line-height:16px;font-size:12px;color:#fff;left:572.00px;width:900px;text-align:right;transform:scaleX(0.91);transform-origin:100% 50%;">42.5900</div>
<div style="top:485.31px;height:16px;line-height:16px;font-size:12px;color:#fff;left:732.26px;width:900px;text-align:right;transform:scaleX(0.91);transform-origin:100% 50%;">0.00</div>
<div style="top:485.31px;height:16px;line-height:16px;font-size:12px;color:#fff;left:995.94px;width:900px;text-align:right;transform:scaleX(0.91);transform-origin:100% 50%;">-0.05</div>
<svg style="left:1903.1px;top:489.73px;width:7.68px;height:7.68px;" viewBox="0 0 8 8"><path d="M1 1L7 7M7 1L1 7" stroke="#e6effa" stroke-width="1.400"/></svg>
<div style="left:16.9px;top:503.04px;width:1903.1px;height:20.48px;background:#efefef;"></div>
<div style="left:224.26px;top:503.04px;width:1.02px;height:20.48px;background:#dadada;"></div>
<div style="left:369.15px;top:503.04px;width:1.02px;height:20.48px;background:#dadada;"></div>
<div style="left:507.39px;top:503.04px;width:1.02px;height:20.48px;background:#dadada;"></div>
<div style="left:668.16px;top:503.04px;width:1.02px;height:20.48px;background:#dadada;"></div>
<div style="left:830.46px;top:503.04px;width:1.02px;height:20.48px;background:#dadada;"></div>
<div style="left:991.23px;top:503.04px;width:1.02px;height:20.48px;background:#dadada;"></div>
<div style="left:1152.51px;top:503.04px;width:1.02px;height:20.48px;background:#dadada;"></div>
<div style="left:1313.79px;top:503.04px;width:1.02px;height:20.48px;background:#dadada;"></div>
<div style="left:1475.07px;top:503.04px;width:1.02px;height:20.48px;background:#dadada;"></div>
<div style="left:1635.84px;top:503.04px;width:1.02px;height:20.48px;background:#dadada;"></div>
<svg style="left:18.43px;top:505.09px;width:12.8px;height:16.38px;" viewBox="0 0 12 16"><path d="M2 1.500H9.500Q11 1.500 11 3V9.500Q11 11 9.500 11H7.500L6 14.500H2Z" fill="#eef6ff" stroke="#4a94e6" stroke-width="1.500"/><path d="M4.300 12V4.200H8.200V8H4.300" fill="none" stroke="#2f7fd8" stroke-width="1.600"/></svg>
<div style="top:505.54px;height:16px;line-height:16px;font-size:12px;color:#222;left:38.40px;transform:scaleX(0.985);transform-origin:0 50%;">hei</div>
<div style="top:505.54px;height:16px;line-height:16px;font-size:12px;color:#222;left:229.38px;transform:scaleX(0.91);transform-origin:0 50%;">2308941</div>
<div style="top:505.54px;height:16px;line-height:16px;font-size:12px;color:#222;left:-394.14px;width:900px;text-align:right;transform:scaleX(0.91);transform-origin:100% 50%;">2019.11.25 14:41:57</div>
<div style="top:505.54px;height:16px;line-height:16px;font-size:12px;color:#222;left:647.68px;transform:scaleX(0.985);transform-origin:0 50%;">buy</div>
<div style="top:505.54px;height:16px;line-height:16px;font-size:12px;color:#222;left:-72.10px;width:900px;text-align:right;transform:scaleX(0.91);transform-origin:100% 50%;">1.00</div>
<div style="top:505.54px;height:16px;line-height:16px;font-size:12px;color:#222;left:88.16px;width:900px;text-align:right;transform:scaleX(0.91);transform-origin:100% 50%;">67.940</div>
<div style="top:505.54px;height:16px;line-height:16px;font-size:12px;color:#222;left:249.44px;width:900px;text-align:right;transform:scaleX(0.91);transform-origin:100% 50%;">0.000</div>
<div style="top:505.54px;height:16px;line-height:16px;font-size:12px;color:#222;left:391.78px;width:900px;text-align:right;transform:scaleX(0.91);transform-origin:100% 50%;">69.940</div>
<svg style="left:1299.97px;top:509.95px;width:7.68px;height:7.68px;" viewBox="0 0 8 8"><path d="M1 1L7 7M7 1L1 7" stroke="#444" stroke-width="1.400"/></svg>
<div style="top:505.54px;height:16px;line-height:16px;font-size:12px;color:#222;left:572.00px;width:900px;text-align:right;transform:scaleX(0.91);transform-origin:100% 50%;">67.880</div>
<div style="top:505.54px;height:16px;line-height:16px;font-size:12px;color:#222;left:732.26px;width:900px;text-align:right;transform:scaleX(0.91);transform-origin:100% 50%;">0.00</div>
<div style="top:505.54px;height:16px;line-height:16px;font-size:12px;color:#222;left:995.94px;width:900px;text-align:right;transform:scaleX(0.91);transform-origin:100% 50%;">-0.06</div>
<svg style="left:1903.1px;top:509.95px;width:7.68px;height:7.68px;" viewBox="0 0 8 8"><path d="M1 1L7 7M7 1L1 7" stroke="#444" stroke-width="1.400"/></svg>
<div style="left:16.9px;top:523.52px;width:1903.1px;height:19.71px;background:#cdcdcd;"></div>
<svg style="left:18.94px;top:527.36px;width:12.29px;height:12.29px;" viewBox="0 0 12 12"><circle cx="6" cy="6" r="4.500" fill="#dcdcdc" stroke="#1a1a1a" stroke-width="1.700"/><path d="M3.600 6H8.400" stroke="#1a1a1a" stroke-width="1.700"/></svg>
<div style="top:525.50px;height:16px;line-height:16px;font-size:12px;color:#111;font-weight:bold;left:38.40px;transform:scaleX(0.978);transform-origin:0 50%;">Kontostand: 10 085.12 EUR&nbsp; Kapital: 10 085.01&nbsp; Marge: 22.12&nbsp; Freie Margin: 10 062.89&nbsp; Margin Stand: 45 592.27 %</div>
<div style="top:525.50px;height:16px;line-height:16px;font-size:12px;color:#111;font-weight:bold;left:995.94px;width:900px;text-align:right;transform:scaleX(0.91);transform-origin:100% 50%;">-0.11</div>
<div style="left:16.38px;top:668.67px;width:1903.62px;height:27.14px;background:#f0f0f0;border-top:1px solid #555;"></div>
<div style="left:19.46px;top:668.67px;width:56.32px;height:21.5px;background:#fff;border:2px solid #444;border-top:none;border-radius:0 0 4px 4px;"></div>
<div style="top:670.91px;height:16px;line-height:16px;font-size:12px;color:#111;left:-402.38px;width:900px;text-align:center;transform:scaleX(0.985);transform-origin:50% 50%;">Handel</div>
<div style="top:670.91px;height:16px;line-height:16px;font-size:12px;color:#8a8a8a;left:87.04px;transform:scaleX(0.985);transform-origin:0 50%;">Belastung</div>
<div style="top:670.91px;height:16px;line-height:16px;font-size:12px;color:#8a8a8a;left:158.72px;transform:scaleX(0.985);transform-origin:0 50%;">Kontohistorie</div>
<div style="top:670.91px;height:16px;line-height:16px;font-size:12px;color:#8a8a8a;left:249.86px;transform:scaleX(0.985);transform-origin:0 50%;">Nachrichten</div>
<div style="top:670.91px;height:16px;line-height:16px;font-size:12px;color:#8a8a8a;left:334.85px;transform:scaleX(0.985);transform-origin:0 50%;">Posteingang</div>
<div style="top:670.91px;height:16px;line-height:16px;font-size:12px;color:#8a8a8a;left:427.52px;transform:scaleX(0.985);transform-origin:0 50%;">Kalender</div>
<div style="top:670.91px;height:16px;line-height:16px;font-size:12px;color:#8a8a8a;left:494.08px;transform:scaleX(0.985);transform-origin:0 50%;">Community</div>
<div style="top:670.91px;height:16px;line-height:16px;font-size:12px;color:#8a8a8a;left:577.54px;transform:scaleX(0.985);transform-origin:0 50%;">Markt</div>
<div style="top:670.91px;height:16px;line-height:16px;font-size:12px;color:#8a8a8a;left:641.54px;transform:scaleX(0.985);transform-origin:0 50%;">Alarme</div>
<div style="top:670.91px;height:16px;line-height:16px;font-size:12px;color:#8a8a8a;left:698.37px;transform:scaleX(0.985);transform-origin:0 50%;">Signale</div>
<div style="top:670.91px;height:16px;line-height:16px;font-size:12px;color:#8a8a8a;left:757.25px;transform:scaleX(0.985);transform-origin:0 50%;">Artikel</div>
<div style="top:670.91px;height:16px;line-height:16px;font-size:12px;color:#8a8a8a;left:818.18px;transform:scaleX(0.985);transform-origin:0 50%;">Code Base</div>
<div style="top:670.91px;height:16px;line-height:16px;font-size:12px;color:#8a8a8a;left:892.42px;transform:scaleX(0.985);transform-origin:0 50%;">VPS</div>
<div style="top:670.91px;height:16px;line-height:16px;font-size:12px;color:#8a8a8a;left:932.35px;transform:scaleX(0.985);transform-origin:0 50%;">Experten</div>
<div style="top:670.91px;height:16px;line-height:16px;font-size:12px;color:#8a8a8a;left:997.38px;transform:scaleX(0.985);transform-origin:0 50%;">Journal</div>
<div style="left:148.99px;top:672.26px;width:1.02px;height:13.82px;background:#8a8a8a;"></div>
<div style="left:239.1px;top:672.26px;width:1.02px;height:13.82px;background:#8a8a8a;"></div>
<div style="left:324.1px;top:672.26px;width:1.02px;height:13.82px;background:#8a8a8a;"></div>
<div style="left:417.28px;top:672.26px;width:1.02px;height:13.82px;background:#8a8a8a;"></div>
<div style="left:484.35px;top:672.26px;width:1.02px;height:13.82px;background:#8a8a8a;"></div>
<div style="left:566.27px;top:672.26px;width:1.02px;height:13.82px;background:#8a8a8a;"></div>
<div style="left:630.78px;top:672.26px;width:1.02px;height:13.82px;background:#8a8a8a;"></div>
<div style="left:688.64px;top:672.26px;width:1.02px;height:13.82px;background:#8a8a8a;"></div>
<div style="left:747.01px;top:672.26px;width:1.02px;height:13.82px;background:#8a8a8a;"></div>
<div style="left:807.94px;top:672.26px;width:1.02px;height:13.82px;background:#8a8a8a;"></div>
<div style="left:882.69px;top:672.26px;width:1.02px;height:13.82px;background:#8a8a8a;"></div>
<div style="left:922.11px;top:672.26px;width:1.02px;height:13.82px;background:#8a8a8a;"></div>
<div style="left:987.14px;top:672.26px;width:1.02px;height:13.82px;background:#8a8a8a;"></div>
<div style="top:674.50px;height:16px;line-height:16px;font-size:7.5px;color:#e02020;font-weight:bold;left:402.94px;">7</div>
<div style="top:674.50px;height:16px;line-height:16px;font-size:7.5px;color:#e02020;font-weight:bold;left:609.79px;">16</div>
<div style="top:675.01px;height:16px;line-height:16px;font-size:7.5px;color:#e02020;font-weight:bold;left:792.58px;">1</div>
<div style="left:0px;top:696.32px;width:1920px;height:320px;background:#fff;border-top:1px solid #a0a0a0;"></div>
<div style="left:0px;top:696.83px;width:15.36px;height:318.98px;background:#f0f0f0;"></div>
<div style="left:0px;top:714.24px;width:15.36px;height:301.57px;background:linear-gradient(90deg,#e2ebf8,#c6d8f0);"></div>
<div style="left:2.05px;top:931.84px;width:13.31px;height:83.46px;background:linear-gradient(90deg,#c4d7f0,#a9c4e8);"></div>
<svg style="left:4.86px;top:702.21px;width:5.63px;height:5.63px;" viewBox="0 0 8 8"><path d="M1 1L7 7M7 1L1 7" stroke="#000" stroke-width="2.2"/></svg>
<div style="top:-8.00px;height:16px;line-height:16px;font-size:10.5px;color:#1a1a1a;left:0.00px;left:1.02px;top:1012.74px;transform:rotate(-90deg);transform-origin:0 0;height:14px;line-height:14px;">Strategietester</div>
<div style="top:710.34px;height:16px;line-height:16px;font-size:12px;color:#222;left:-757.15px;width:900px;text-align:right;transform:scaleX(0.85);transform-origin:100% 50%;">Expertenprogramm:</div>
<div style="top:740.03px;height:16px;line-height:16px;font-size:12px;color:#222;left:-757.15px;width:900px;text-align:right;transform:scaleX(0.85);transform-origin:100% 50%;">Symbol:</div>
<div style="top:768.19px;height:16px;line-height:16px;font-size:12px;color:#222;left:-757.15px;width:900px;text-align:right;transform:scaleX(0.85);transform-origin:100% 50%;">Datum:</div>
<div style="top:805.06px;height:16px;line-height:16px;font-size:12px;color:#222;left:-757.15px;width:900px;text-align:right;transform:scaleX(0.85);transform-origin:100% 50%;">Vorwärtstest:</div>
<div style="top:842.94px;height:16px;line-height:16px;font-size:12px;color:#222;left:-757.15px;width:900px;text-align:right;transform:scaleX(0.85);transform-origin:100% 50%;">Verzögerung:</div>
<div style="top:872.13px;height:16px;line-height:16px;font-size:12px;color:#222;left:-757.15px;width:900px;text-align:right;transform:scaleX(0.85);transform-origin:100% 50%;">Modellierung:</div>
<div style="top:900.29px;height:16px;line-height:16px;font-size:12px;color:#222;left:-757.15px;width:900px;text-align:right;transform:scaleX(0.85);transform-origin:100% 50%;">Einlage:</div>
<div style="top:937.66px;height:16px;line-height:16px;font-size:12px;color:#222;left:-757.15px;width:900px;text-align:right;transform:scaleX(0.85);transform-origin:100% 50%;">Optimierung:</div>
<div style="left:151.04px;top:707.58px;width:600.06px;height:21.5px;background:#e1e1e1;border:1px solid #adadad;"></div>
<div style="top:710.34px;height:16px;line-height:16px;font-size:12px;color:#111;left:155.14px;transform:scaleX(0.9);transform-origin:0 50%;">Market\EA Builder MT5.ex5</div>
<svg style="left:736.51px;top:716.29px;width:8.7px;height:5.12px;" viewBox="0 0 10 6"><path d="M1 1L5 5L9 1" stroke="#444" stroke-width="1.5" fill="none"/></svg>
<div style="left:758.27px;top:707.58px;width:22.02px;height:21.5px;background:#e6e6e6;border:1px solid #adadad;"></div>
<svg style="left:761.34px;top:710.14px;width:16.38px;height:16.38px;" viewBox="0 0 16 16"><path d="M2 8L8 3L14 6L9 12Z" fill="#e7b928" stroke="#9a7410" stroke-width="1"/><path d="M2 10L8 5L14 8L9 14Z" fill="#f6d659" stroke="#9a7410" stroke-width="1"/></svg>
<div style="left:787.46px;top:707.58px;width:22.02px;height:21.5px;background:#e6e6e6;border:1px solid #adadad;"></div>
<svg style="left:790.53px;top:710.14px;width:16.38px;height:16.38px;" viewBox="0 0 16 16"><circle cx="8" cy="8" r="5.600" fill="#2f7de0" stroke="#1b56a8" stroke-width="1"/><circle cx="6.500" cy="6.500" r="2" fill="#7fb4f4"/></svg>
<div style="left:151.04px;top:737.79px;width:306.69px;height:19.97px;background:#fff;border:1px solid #7a7a7a;"></div>
<div style="top:739.78px;height:16px;line-height:16px;font-size:12px;color:#111;left:155.14px;transform:scaleX(0.9);transform-origin:0 50%;">VON</div>
<svg style="left:443.14px;top:745.73px;width:8.7px;height:5.12px;" viewBox="0 0 10 6"><path d="M1 1L5 5L9 1" stroke="#444" stroke-width="1.5" fill="none"/></svg>
<div style="left:465.41px;top:737.79px;width:115.2px;height:19.97px;background:#e1e1e1;border:1px solid #adadad;"></div>
<div style="top:739.78px;height:16px;line-height:16px;font-size:12px;color:#111;left:469.50px;transform:scaleX(0.9);transform-origin:0 50%;">H1</div>
<svg style="left:566.02px;top:745.73px;width:8.7px;height:5.12px;" viewBox="0 0 10 6"><path d="M1 1L5 5L9 1" stroke="#444" stroke-width="1.5" fill="none"/></svg>
<div style="left:151.04px;top:765.95px;width:182.27px;height:20.48px;background:#e1e1e1;border:1px solid #adadad;"></div>
<div style="top:768.19px;height:16px;line-height:16px;font-size:12px;color:#111;left:155.14px;transform:scaleX(0.9);transform-origin:0 50%;">Letztes Jahr</div>
<svg style="left:318.72px;top:774.14px;width:8.7px;height:5.12px;" viewBox="0 0 10 6"><path d="M1 1L5 5L9 1" stroke="#444" stroke-width="1.5" fill="none"/></svg>
<div style="left:340.99px;top:765.95px;width:115.71px;height:20.48px;background:#fff;border:1px solid #7a7a7a;"></div>
<div style="top:768.19px;height:16px;line-height:16px;font-size:12px;color:#8a8a8a;left:345.09px;transform:scaleX(0.9);transform-origin:0 50%;">2019.01.01</div>
<div style="left:430.08px;top:771.07px;width:9.22px;height:10.24px;background:#f4f4f4;border:1px solid #c4c4c4;"></div>
<svg style="left:442.11px;top:774.14px;width:8.7px;height:5.12px;" viewBox="0 0 10 6"><path d="M1 1L5 5L9 1" stroke="#a0a0a0" stroke-width="1.5" fill="none"/></svg>
<div style="left:465.41px;top:765.95px;width:115.2px;height:20.48px;background:#fff;border:1px solid #7a7a7a;"></div>
<div style="top:768.19px;height:16px;line-height:16px;font-size:12px;color:#8a8a8a;left:469.50px;transform:scaleX(0.9);transform-origin:0 50%;">2019.11.24</div>
<div style="left:553.98px;top:771.07px;width:9.22px;height:10.24px;background:#f4f4f4;border:1px solid #c4c4c4;"></div>
<svg style="left:566.02px;top:774.14px;width:8.7px;height:5.12px;" viewBox="0 0 10 6"><path d="M1 1L5 5L9 1" stroke="#a0a0a0" stroke-width="1.5" fill="none"/></svg>
<div style="left:151.04px;top:802.3px;width:182.27px;height:20.99px;background:#e1e1e1;border:1px solid #adadad;"></div>
<div style="top:804.80px;height:16px;line-height:16px;font-size:12px;color:#111;left:155.14px;transform:scaleX(0.9);transform-origin:0 50%;">No</div>
<svg style="left:318.72px;top:810.75px;width:8.7px;height:5.12px;" viewBox="0 0 10 6"><path d="M1 1L5 5L9 1" stroke="#444" stroke-width="1.5" fill="none"/></svg>
<div style="left:340.99px;top:802.3px;width:115.71px;height:20.99px;background:#fff;border:1px solid #7a7a7a;"></div>
<div style="top:804.80px;height:16px;line-height:16px;font-size:12px;color:#8a8a8a;left:345.09px;transform:scaleX(0.9);transform-origin:0 50%;">2018.01.01</div>
<div style="left:430.08px;top:807.68px;width:9.22px;height:10.24px;background:#f4f4f4;border:1px solid #c4c4c4;"></div>
<svg style="left:442.11px;top:810.75px;width:8.7px;height:5.12px;" viewBox="0 0 10 6"><path d="M1 1L5 5L9 1" stroke="#a0a0a0" stroke-width="1.5" fill="none"/></svg>
<div style="left:151.04px;top:840.19px;width:360.45px;height:20.99px;background:#fff;border:1px solid #7a7a7a;"></div>
<div style="top:842.69px;height:16px;line-height:16px;font-size:12px;color:#111;left:155.14px;transform:scaleX(0.9);transform-origin:0 50%;">5 ms</div>
<svg style="left:496.9px;top:848.64px;width:8.7px;height:5.12px;" viewBox="0 0 10 6"><path d="M1 1L5 5L9 1" stroke="#444" stroke-width="1.5" fill="none"/></svg>
<div style="top:842.94px;height:16px;line-height:16px;font-size:12px;color:#222;left:517.63px;transform:scaleX(0.885);transform-origin:0 50%;">emulieren Sie Slippage und Requotes während der Handelstätigkeit</div>
<div style="left:151.04px;top:869.38px;width:360.45px;height:20.48px;background:#e1e1e1;border:1px solid #adadad;"></div>
<div style="top:871.62px;height:16px;line-height:16px;font-size:12px;color:#111;left:155.14px;transform:scaleX(0.9);transform-origin:0 50%;">Jeder Tick anhand realer Ticks</div>
<svg style="left:496.9px;top:877.57px;width:8.7px;height:5.12px;" viewBox="0 0 10 6"><path d="M1 1L5 5L9 1" stroke="#444" stroke-width="1.5" fill="none"/></svg>
<div style="left:518.66px;top:873.47px;width:12.8px;height:12.8px;background:#fff;border:1px solid #444;"></div>
<div style="top:872.13px;height:16px;line-height:16px;font-size:12px;color:#222;left:534.53px;transform:scaleX(0.885);transform-origin:0 50%;">Gewinn in Pips für eine schnellere Berechnung</div>
<div style="left:151.04px;top:897.54px;width:119.3px;height:20.99px;background:#fff;border:1px solid #7a7a7a;"></div>
<div style="top:900.03px;height:16px;line-height:16px;font-size:12px;color:#111;left:155.14px;transform:scaleX(0.9);transform-origin:0 50%;">1000</div>
<svg style="left:255.74px;top:905.98px;width:8.7px;height:5.12px;" viewBox="0 0 10 6"><path d="M1 1L5 5L9 1" stroke="#444" stroke-width="1.5" fill="none"/></svg>
<div style="left:277.5px;top:897.54px;width:76.29px;height:20.99px;background:#fff;border:1px solid #7a7a7a;"></div>
<div style="top:900.03px;height:16px;line-height:16px;font-size:12px;color:#111;left:281.60px;transform:scaleX(0.9);transform-origin:0 50%;">EUR</div>
<svg style="left:339.2px;top:905.98px;width:8.7px;height:5.12px;" viewBox="0 0 10 6"><path d="M1 1L5 5L9 1" stroke="#444" stroke-width="1.5" fill="none"/></svg>
<div style="left:434.18px;top:897.54px;width:77.31px;height:20.99px;background:#fff;border:1px solid #7a7a7a;"></div>
<div style="top:900.03px;height:16px;line-height:16px;font-size:12px;color:#111;left:438.27px;transform:scaleX(0.9);transform-origin:0 50%;">1:200</div>
<svg style="left:496.9px;top:905.98px;width:8.7px;height:5.12px;" viewBox="0 0 10 6"><path d="M1 1L5 5L9 1" stroke="#444" stroke-width="1.5" fill="none"/></svg>
<div style="top:900.29px;height:16px;line-height:16px;font-size:12px;color:#222;left:517.63px;transform:scaleX(0.885);transform-origin:0 50%;">Hebel</div>
<div style="left:151.04px;top:934.91px;width:360.45px;height:20.99px;background:#e1e1e1;border:1px solid #adadad;"></div>
<div style="top:937.41px;height:16px;line-height:16px;font-size:12px;color:#111;left:155.14px;transform:scaleX(0.9);transform-origin:0 50%;">Deaktiviert</div>
<svg style="left:496.9px;top:943.36px;width:8.7px;height:5.12px;" viewBox="0 0 10 6"><path d="M1 1L5 5L9 1" stroke="#444" stroke-width="1.5" fill="none"/></svg>
<div style="left:518.66px;top:939.01px;width:12.8px;height:12.8px;background:#fff;border:1px solid #444;"></div>
<svg style="left:520.19px;top:940.54px;width:9.73px;height:9.73px;" viewBox="0 0 10 10"><path d="M1.500 5L4 7.500L8.500 2" stroke="#111" stroke-width="1.400" fill="none"/></svg>
<div style="top:937.66px;height:16px;line-height:16px;font-size:12px;color:#222;left:534.53px;transform:scaleX(0.885);transform-origin:0 50%;">visueller Modus mit der Anzeige von Charts, Indikatoren und dem Handel</div>
<div style="left:16.38px;top:991.23px;width:1903.62px;height:24.58px;background:#f0f0f0;border-top:1px solid #555;"></div>
<div style="left:89.6px;top:991.23px;width:89.6px;height:19.97px;background:#fff;border:2px solid #444;border-top:none;border-radius:0 0 4px 4px;"></div>
<div style="top:993.47px;height:16px;line-height:16px;font-size:12px;color:#8a8a8a;left:27.65px;transform:scaleX(0.985);transform-origin:0 50%;">Überblick</div>
<div style="top:993.47px;height:16px;line-height:16px;font-size:12px;color:#111;left:-315.60px;width:900px;text-align:center;">Einstellungen</div>
<div style="top:993.47px;height:16px;line-height:16px;font-size:12px;color:#8a8a8a;left:189.95px;transform:scaleX(0.985);transform-origin:0 50%;">Eingaben</div>
<div style="top:993.47px;height:16px;line-height:16px;font-size:12px;color:#8a8a8a;left:259.58px;transform:scaleX(0.985);transform-origin:0 50%;">Backtest</div>
<div style="top:993.47px;height:16px;line-height:16px;font-size:12px;color:#8a8a8a;left:323.07px;transform:scaleX(0.985);transform-origin:0 50%;">Diagramm</div>
<div style="top:993.47px;height:16px;line-height:16px;font-size:12px;color:#8a8a8a;left:399.36px;transform:scaleX(0.985);transform-origin:0 50%;">Agenten</div>
<div style="top:993.47px;height:16px;line-height:16px;font-size:12px;color:#8a8a8a;left:463.87px;transform:scaleX(0.985);transform-origin:0 50%;">Journal</div>
<div style="left:249.86px;top:994.82px;width:1.02px;height:13.82px;background:#8a8a8a;"></div>
<div style="left:312.83px;top:994.82px;width:1.02px;height:13.82px;background:#8a8a8a;"></div>
<div style="left:389.12px;top:994.82px;width:1.02px;height:13.82px;background:#8a8a8a;"></div>
<div style="left:454.14px;top:994.82px;width:1.02px;height:13.82px;background:#8a8a8a;"></div>
<div style="left:0px;top:1015.81px;width:1920px;height:25.09px;background:#f0f0f0;border-top:1px solid #d4d4d4;"></div>
<div style="top:1021.63px;height:16px;line-height:16px;font-size:12px;color:#111;left:3.07px;transform:scaleX(0.985);transform-origin:0 50%;">Für Hilfe,F1 drücken</div>
<div style="top:1022.14px;height:16px;line-height:16px;font-size:12px;color:#111;left:1233.92px;transform:scaleX(0.985);transform-origin:0 50%;">Default</div>
<div style="left:1227.26px;top:1018.88px;width:1.02px;height:19.46px;background:#c9c9c9;"></div>
<div style="left:1355.78px;top:1018.88px;width:1.02px;height:19.46px;background:#c9c9c9;"></div>
<div style="left:1454.08px;top:1018.88px;width:1.02px;height:19.46px;background:#c9c9c9;"></div>
<div style="left:1525.76px;top:1018.88px;width:1.02px;height:19.46px;background:#c9c9c9;"></div>
<div style="left:1595.39px;top:1018.88px;width:1.02px;height:19.46px;background:#c9c9c9;"></div>
<div style="left:1664.51px;top:1018.88px;width:1.02px;height:19.46px;background:#c9c9c9;"></div>
<div style="left:1734.14px;top:1018.88px;width:1.02px;height:19.46px;background:#c9c9c9;"></div>
<div style="left:1792px;top:1018.88px;width:1.02px;height:19.46px;background:#c9c9c9;"></div>
<div style="left:1808.9px;top:1032.7px;width:11.78px;height:6.66px;background:#3fc23f;"></div>
<div style="left:1912.32px;top:992.77px;width:7.68px;height:19.46px;background:#6fc93f;"></div>
<div style="left:0px;top:1040.38px;width:1920px;height:39.94px;background:#0c1a22;"></div>
<svg style="left:15.87px;top:1052.67px;width:15.87px;height:15.87px;" viewBox="0 0 16 16"><path d="M0 2.200L6.800 1.200V7.400H0ZM7.800 1.100L16 0V7.400H7.800ZM0 8.400H6.800V14.600L0 13.700ZM7.800 8.400H16V16L7.800 14.800Z" fill="#fff"/></svg>
<svg style="left:64px;top:1051.14px;width:23.04px;height:20.48px;" viewBox="0 0 22 20"><path d="M1 3h7l2 2h11v3H1Z" fill="#e8b830"/><rect x="1" y="6" width="20" height="12" fill="#f7d66a"/><rect x="6" y="10" width="10" height="8" fill="#4aa8e8"/><rect x="8" y="14" width="6" height="4" fill="#f7f7f7"/></svg>
<svg style="left:112.64px;top:1050.11px;width:23.55px;height:23.55px;" viewBox="0 0 20 20"><rect x="0" y="0" width="20" height="20" fill="#7cb342"/><rect x="10" y="2" width="8" height="6" fill="#dcedc8"/><rect x="4" y="8" width="6" height="5" fill="#c5e1a5"/><rect x="2" y="13" width="7" height="6" fill="#e8f5d8"/><rect x="10" y="10" width="9" height="9" fill="#aed581"/></svg>
<svg style="left:162.3px;top:1049.6px;width:24.58px;height:24.58px;" viewBox="0 0 20 20"><circle cx="10" cy="10.500" r="8.500" fill="#ff9a1f"/><path d="M10 2a8.500 8.500 0 0 1 8.500 8.500A8.500 8.500 0 0 1 10 19c5-3 5-11 0-17Z" fill="#e5332a"/><circle cx="9.500" cy="11" r="4.600" fill="#6a3cc9"/><path d="M4 7c2-3 6-3 8 0-3-1-5 1-4 4-3 0-5-2-4-4Z" fill="#ffcf3a"/></svg>
<svg style="left:211.46px;top:1049.6px;width:24.06px;height:24.58px;" viewBox="0 0 20 20"><path d="M10 1.500a8.300 8.300 0 0 0-7 12.700L1.500 19l5-1.400A8.300 8.300 0 1 0 10 1.500Z" fill="#2fd05a" stroke="#fff" stroke-width="1.400"/><path d="M7 6c-1 1-.5 3 1.500 5s4 2.500 5 1.500l-1.600-1.600-1 .5c-1-.4-2-1.400-2.400-2.400l.5-1Z" fill="#fff"/></svg>
<svg style="left:260.1px;top:1049.6px;width:24.58px;height:24.58px;" viewBox="0 0 20 20"><circle cx="11" cy="9" r="7.500" fill="#2a7de0"/><path d="M2 9l9-3 6 4v8H2Z" fill="#f4f6fa"/><path d="M2 9l7.500 5L17 10" stroke="#c4cad4" stroke-width="1" fill="none"/></svg>
<svg style="left:308.74px;top:1050.11px;width:23.04px;height:24.06px;" viewBox="0 0 20 20"><path d="M5 2h11l-3 16H2Z" fill="#cfe6f4" stroke="#7fa8c0" stroke-width="1"/><path d="M6 6h8M5.500 9h8M5 12h8" stroke="#5f9cc0" stroke-width="1.200"/></svg>
<svg style="left:358.4px;top:1049.6px;width:22.02px;height:25.09px;" viewBox="0 0 19 20"><path d="M2 1h10l5 5v13H2Z" fill="#f4f8f0" stroke="#3fa23f" stroke-width="1.200"/><path d="M12 1v5h5" fill="#3fc23f"/><rect x="5" y="9" width="9" height="7" fill="#5fc85f"/><path d="M5 11.500h9M5 13.800h9M9.500 9v7" stroke="#fff" stroke-width=".8"/></svg>
<svg style="left:408.06px;top:1049.6px;width:20.48px;height:25.09px;" viewBox="0 0 16 20"><rect x="1" y="1" width="14" height="18" rx="1" fill="#f0f0f0" stroke="#bdbdbd" stroke-width="1"/><rect x="3" y="3" width="10" height="4" fill="#666"/><g fill="#555"><rect x="3" y="9" width="2.400" height="2.200"/><rect x="6.800" y="9" width="2.400" height="2.200"/><rect x="10.600" y="9" width="2.400" height="2.200"/><rect x="3" y="12.400" width="2.400" height="2.200"/><rect x="6.800" y="12.400" width="2.400" height="2.200"/><rect x="10.600" y="12.400" width="2.400" height="2.200"/><rect x="3" y="15.600" width="2.400" height="2.200"/><rect x="6.800" y="15.600" width="2.400" height="2.200"/><rect x="10.600" y="15.600" width="2.400" height="2.200"/></g></svg>
<svg style="left:455.17px;top:1049.6px;width:24.58px;height:24.58px;" viewBox="0 0 20 20"><circle cx="10" cy="10" r="8.800" fill="#2ea6e0"/><path d="M4.500 10l10-4.200-1.800 9-3.200-2.400-1.600 1.600-.3-2.800 5-4.400-6.200 3.800Z" fill="#fff"/><rect x="11" y="13" width="8" height="5.500" rx="1" fill="#8a8a8a"/></svg>
<div style="left:492.54px;top:1040.38px;width:48.64px;height:39.94px;background:#303c46;"></div>
<svg style="left:506.88px;top:1052.67px;width:21.5px;height:16.38px;" viewBox="0 0 18 14"><path d="M2 12c4-1 9-5 12-10" stroke="#3fa0f0" stroke-width="1.600" fill="none"/><path d="M10 3l5-1.500-.6 5" stroke="#3fa0f0" stroke-width="1.400" fill="none"/><path d="M5 13V9M8.500 13V7M12 13V8" stroke="#1f5fa8" stroke-width="1.600"/></svg>
<svg style="left:552.96px;top:1049.6px;width:25.09px;height:25.09px;" viewBox="0 0 20 20"><circle cx="10" cy="10" r="9" fill="#16264a"/><circle cx="13" cy="7.500" r="3.200" fill="none" stroke="#fff" stroke-width="1.600"/><path d="M1.500 11l6 2.600 3.400-3.200" stroke="#fff" stroke-width="2.400" fill="none"/><circle cx="7" cy="14" r="2.200" fill="#fff"/></svg>
<svg style="left:601.6px;top:1049.09px;width:28.16px;height:26.62px;" viewBox="0 0 22 20"><rect x="1" y="2" width="15" height="13" rx="2.500" fill="#6a6ce8"/><path d="M4 6h9M4 9h6" stroke="#fff" stroke-width="1.600"/><circle cx="16.500" cy="14.500" r="4.200" fill="#e53a30"/></svg>
<svg style="left:650.24px;top:1049.6px;width:25.09px;height:25.09px;" viewBox="0 0 20 20"><circle cx="10" cy="10" r="8" fill="#2e8ad8"/><path d="M10 2a8 8 0 0 1 0 16Z" fill="#3fb347"/><path d="M4 12l4-6 3 4 3-5 3 8Z" fill="#f3c23a"/></svg>
<svg style="left:699.9px;top:1049.6px;width:24.58px;height:24.58px;" viewBox="0 0 20 20"><circle cx="10" cy="10" r="8" fill="#7a4a1a"/><circle cx="10" cy="10" r="5" fill="#c9922a"/><path d="M6 10h8M10 6v8" stroke="#4a2a0a" stroke-width="1.400"/></svg>
<div style="left:156.16px;top:1078.27px;width:37.38px;height:2.05px;background:#76b9ed;opacity:.75;"></div>
<div style="left:204.8px;top:1078.27px;width:37.38px;height:2.05px;background:#76b9ed;opacity:.75;"></div>
<div style="left:258.56px;top:1078.27px;width:36.86px;height:2.05px;background:#76b9ed;opacity:.75;"></div>
<div style="left:307.71px;top:1078.27px;width:36.86px;height:2.05px;background:#76b9ed;opacity:.75;"></div>
<div style="left:356.86px;top:1078.27px;width:36.86px;height:2.05px;background:#76b9ed;opacity:.75;"></div>
<div style="left:406.02px;top:1078.27px;width:36.35px;height:2.05px;background:#76b9ed;opacity:.75;"></div>
<div style="left:454.66px;top:1078.27px;width:36.86px;height:2.05px;background:#76b9ed;opacity:.75;"></div>
<div style="left:492.54px;top:1078.27px;width:48.64px;height:2.05px;background:#8ec8f4;opacity:.75;"></div>
<div style="left:552.45px;top:1078.27px;width:36.35px;height:2.05px;background:#76b9ed;opacity:.75;"></div>
<div style="left:601.6px;top:1078.27px;width:36.35px;height:2.05px;background:#76b9ed;opacity:.75;"></div>
<div style="left:650.24px;top:1078.27px;width:36.86px;height:2.05px;background:#76b9ed;opacity:.75;"></div>
<div style="left:699.39px;top:1078.27px;width:36.35px;height:2.05px;background:#76b9ed;opacity:.75;"></div>
<svg style="left:1759.23px;top:1055.74px;width:11.78px;height:7.17px;" viewBox="0 0 10 6"><path d="M1 5L5 1L9 5" stroke="#fff" stroke-width="1.500" fill="none"/></svg>
<svg style="left:1781.76px;top:1053.7px;width:16.38px;height:12.29px;" viewBox="0 0 16 12"><rect x="1" y="3" width="12" height="7" fill="#fff"/><rect x="13" y="5" width="1.600" height="3" fill="#fff"/><path d="M3 3V1h3v2" stroke="#fff" stroke-width="1" fill="none"/></svg>
<svg style="left:1807.36px;top:1053.7px;width:13.82px;height:12.8px;" viewBox="0 0 12 12"><path d="M1 11L11 1V11Z" fill="#9aa4ab"/><path d="M1 11L6 6V11Z" fill="#fff"/></svg>
<svg style="left:1827.84px;top:1053.7px;width:15.36px;height:12.8px;" viewBox="0 0 14 12"><path d="M1 4.500h3l3.500-3v9L4 7.500H1Z" fill="#fff"/><path d="M9.500 3.500a3.500 3.500 0 0 1 0 5M11.500 1.800a6 6 0 0 1 0 8.400" stroke="#fff" stroke-width="1" fill="none"/></svg>
<div style="top:1043.14px;height:16px;line-height:16px;font-size:12px;color:#fff;left:1433.14px;width:900px;text-align:center;transform:scaleX(0.91);transform-origin:50% 50%;">15:32</div>
<div style="top:1061.57px;height:16px;line-height:16px;font-size:12px;color:#fff;left:1433.14px;width:900px;text-align:center;transform:scaleX(0.91);transform-origin:50% 50%;">25.11.2019</div>
<div style="left:1510.91px;top:970.24px;width:400.9px;height:60.42px;background:#f2f2f2;border:1px solid #d6d6d6;border-radius:5px;box-shadow:0 1px 4px rgba(0,0,0,.25);"></div>
<svg style="left:1807.36px;top:970.24px;width:87.04px;height:87.04px;" viewBox="0 0 100 100"><path d="M64 64L86 87" stroke="#fff" stroke-width="21" stroke-linecap="round"/><circle cx="41" cy="40" r="27.500" fill="#f2f2f2" stroke="#fff" stroke-width="14"/><path d="M62 62L86 87" stroke="#3c3c3c" stroke-width="16" stroke-linecap="round"/><circle cx="41" cy="40" r="27.500" fill="#f4f4f4" stroke="#3c3c3c" stroke-width="8.500"/><path d="M41 25V55M26 40H56" stroke="#3c3c3c" stroke-width="9"/></svg>
</div></body></html>
